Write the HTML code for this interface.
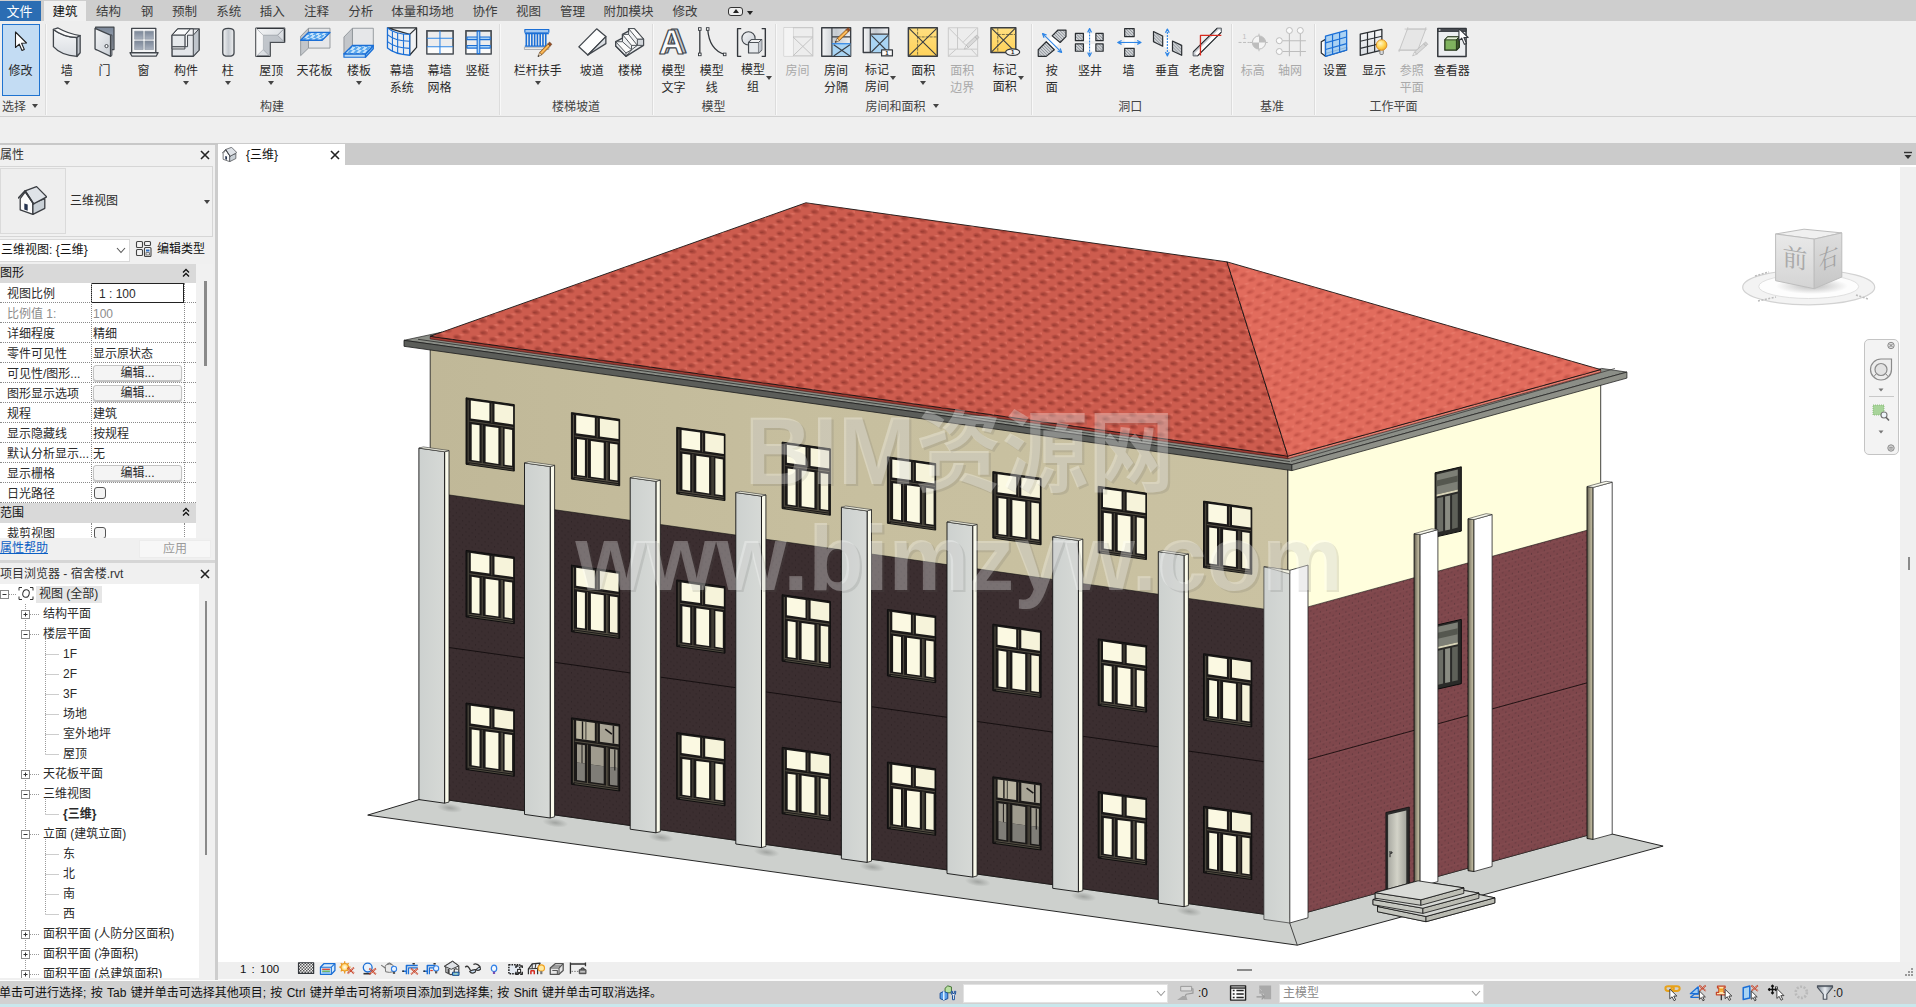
<!DOCTYPE html>
<html lang="zh-CN"><head><meta charset="utf-8"><title>Revit</title>
<style>
*{box-sizing:border-box}
html,body{margin:0;padding:0}
body{width:1916px;height:1007px;position:relative;overflow:hidden;background:#fff;font:12px/14px "Liberation Sans","Noto Sans CJK SC",sans-serif;color:#2a2a2a}
.a{position:absolute}
.t{position:absolute;white-space:nowrap}
.c{position:absolute;white-space:nowrap;transform:translateX(-50%);text-align:center}
.dis{color:#a9a9a9}
.arr{position:absolute;width:0;height:0;border-left:3px solid transparent;border-right:3px solid transparent;border-top:4px solid #444}
.sep{position:absolute;top:24px;height:91px;width:1px;background:#dcdcdc;border-right:1px solid #f8f8f8;box-sizing:content-box}
.row{position:absolute;left:0;width:196px;height:20px;border-bottom:1px dotted #8a8a8a}
.row .l{position:absolute;left:7px;top:3.5px;white-space:nowrap}
.row .v{position:absolute;left:93px;top:3.5px;white-space:nowrap}
.btn{position:absolute;left:93px;top:2px;width:89px;height:16px;border:1px solid #c4c4c4;border-radius:3px;background:#f4f4f4;text-align:center;line-height:14px;box-shadow:0 1px 1px #bbb}
.tree{position:absolute;white-space:nowrap}
</style></head><body>

<div class="a" style="left:0;top:0;width:1916px;height:21px;background:#cecece"></div>
<div class="a" style="left:0;top:1px;width:41px;height:20px;background:#2b6db3"></div>
<div class="c" style="left:19.5px;top:5px;color:#fff;font-size:13px">文件</div>
<div class="a" style="left:44px;top:1px;width:42px;height:20px;background:#f0f0f0"></div>
<div class="c" style="left:65px;top:5px;color:#111;font-size:12.5px">建筑</div>
<div class="c" style="left:108.5px;top:5px;color:#3c3c3c;font-size:12.5px">结构</div>
<div class="c" style="left:147px;top:5px;color:#3c3c3c;font-size:12.5px">钢</div>
<div class="c" style="left:184.4px;top:5px;color:#3c3c3c;font-size:12.5px">预制</div>
<div class="c" style="left:228.8px;top:5px;color:#3c3c3c;font-size:12.5px">系统</div>
<div class="c" style="left:272.2px;top:5px;color:#3c3c3c;font-size:12.5px">插入</div>
<div class="c" style="left:316.6px;top:5px;color:#3c3c3c;font-size:12.5px">注释</div>
<div class="c" style="left:360.7px;top:5px;color:#3c3c3c;font-size:12.5px">分析</div>
<div class="c" style="left:422.5px;top:5px;color:#3c3c3c;font-size:12.5px">体量和场地</div>
<div class="c" style="left:485px;top:5px;color:#3c3c3c;font-size:12.5px">协作</div>
<div class="c" style="left:528.4px;top:5px;color:#3c3c3c;font-size:12.5px">视图</div>
<div class="c" style="left:572.5px;top:5px;color:#3c3c3c;font-size:12.5px">管理</div>
<div class="c" style="left:628.6px;top:5px;color:#3c3c3c;font-size:12.5px">附加模块</div>
<div class="c" style="left:685px;top:5px;color:#3c3c3c;font-size:12.5px">修改</div>
<div class="a" style="left:728px;top:7px;width:15px;height:9px;border:1px solid #333;border-radius:3px;background:#eee"></div>
<div class="a" style="left:733px;top:9px;width:0;height:0;border-left:3px solid transparent;border-right:3px solid transparent;border-bottom:4px solid #222"></div>
<div class="arr" style="left:747px;top:11px;border-top-color:#222"></div>
<div class="a" style="left:0;top:20.5px;width:1916px;height:96.5px;background:#eeeeee;border-bottom:1px solid #d0d0d0"></div>
<div class="a" style="left:0;top:117px;width:1916px;height:26px;background:#efefef"></div>
<div class="a" style="left:2px;top:24px;width:38px;height:72px;background:#c3dcf3;border:1px solid #1f73d0"></div>
<div class="c" style="left:20.5px;top:64.3px">修改</div>
<div class="c" style="left:66.8px;top:64.3px">墙</div>
<div class="arr" style="left:63.8px;top:81px"></div>
<div class="c" style="left:104.5px;top:64.3px">门</div>
<div class="c" style="left:143.6px;top:64.3px">窗</div>
<div class="c" style="left:186px;top:64.3px">构件</div>
<div class="arr" style="left:183px;top:81px"></div>
<div class="c" style="left:227.8px;top:64.3px">柱</div>
<div class="arr" style="left:224.8px;top:81px"></div>
<div class="c" style="left:271.2px;top:64.3px">屋顶</div>
<div class="arr" style="left:268.2px;top:81px"></div>
<div class="c" style="left:314.6px;top:64.3px">天花板</div>
<div class="c" style="left:359px;top:64.3px">楼板</div>
<div class="arr" style="left:356px;top:81px"></div>
<div class="c" style="left:401.8px;top:64.3px">幕墙</div>
<div class="c" style="left:401.8px;top:81.3px">系统</div>
<div class="c" style="left:439.5px;top:64.3px">幕墙</div>
<div class="c" style="left:439.5px;top:81.3px">网格</div>
<div class="c" style="left:477.6px;top:64.3px">竖梃</div>
<div class="c" style="left:537.7px;top:64.3px">栏杆扶手</div>
<div class="arr" style="left:534.7px;top:81px"></div>
<div class="c" style="left:591.8px;top:64.3px">坡道</div>
<div class="c" style="left:630px;top:64.3px">楼梯</div>
<div class="c" style="left:673.4px;top:64.3px">模型</div>
<div class="c" style="left:673.4px;top:81.3px">文字</div>
<div class="c" style="left:711.8px;top:64.3px">模型</div>
<div class="c" style="left:711.8px;top:81.3px">线</div>
<div class="c" style="left:752.9px;top:63px">模型</div>
<div class="c" style="left:752.9px;top:80px">组</div>
<div class="arr" style="left:765.9px;top:76px"></div>
<div class="c dis" style="left:797.6px;top:64.3px">房间</div>
<div class="c" style="left:836px;top:64.3px">房间</div>
<div class="c" style="left:836px;top:81.3px">分隔</div>
<div class="c" style="left:877px;top:63px">标记</div>
<div class="c" style="left:877px;top:80px">房间</div>
<div class="arr" style="left:890.0px;top:76px"></div>
<div class="c" style="left:923.2px;top:64.3px">面积</div>
<div class="arr" style="left:920.2px;top:81px"></div>
<div class="c dis" style="left:962.3px;top:64.3px">面积</div>
<div class="c dis" style="left:962.3px;top:81.3px">边界</div>
<div class="c" style="left:1004.7px;top:63px">标记</div>
<div class="c" style="left:1004.7px;top:80px">面积</div>
<div class="arr" style="left:1017.7px;top:76px"></div>
<div class="c" style="left:1051.8px;top:64.3px">按</div>
<div class="c" style="left:1051.8px;top:81.3px">面</div>
<div class="c" style="left:1089.9px;top:64.3px">竖井</div>
<div class="c" style="left:1128.6px;top:64.3px">墙</div>
<div class="c" style="left:1167px;top:64.3px">垂直</div>
<div class="c" style="left:1206.8px;top:64.3px">老虎窗</div>
<div class="c dis" style="left:1252.7px;top:64.3px">标高</div>
<div class="c dis" style="left:1290px;top:64.3px">轴网</div>
<div class="c" style="left:1335px;top:64.3px">设置</div>
<div class="c" style="left:1374px;top:64.3px">显示</div>
<div class="c dis" style="left:1411.8px;top:64.3px">参照</div>
<div class="c dis" style="left:1411.8px;top:81.3px">平面</div>
<div class="c" style="left:1451.7px;top:64.3px">查看器</div>
<div class="sep" style="left:45px"></div>
<div class="sep" style="left:499px"></div>
<div class="sep" style="left:652px"></div>
<div class="sep" style="left:775px"></div>
<div class="sep" style="left:1030.5px"></div>
<div class="sep" style="left:1230.5px"></div>
<div class="sep" style="left:1313.5px"></div>
<div class="c" style="left:272px;top:100px;color:#444">构建</div>
<div class="c" style="left:576px;top:100px;color:#444">楼梯坡道</div>
<div class="c" style="left:713.5px;top:100px;color:#444">模型</div>
<div class="c" style="left:895.5px;top:100px;color:#444">房间和面积</div>
<div class="c" style="left:1130.3px;top:100px;color:#444">洞口</div>
<div class="c" style="left:1272px;top:100px;color:#444">基准</div>
<div class="c" style="left:1393.6px;top:100px;color:#444">工作平面</div>
<div class="arr" style="left:932.5px;top:104px"></div>
<div class="t" style="left:2px;top:100px;color:#444">选择</div>
<div class="arr" style="left:32px;top:104px"></div>
<div class="a" style="left:0;top:143px;width:215px;height:417px;background:#f0f0f0"></div>
<div class="a" style="left:215px;top:143px;width:2.5px;height:837px;background:#cdcdcd"></div>
<div class="a" style="left:0;top:143px;width:217.5px;height:1.5px;background:#c8c8c8"></div>
<div class="t" style="left:0;top:148px;color:#333">属性</div>
<svg class="a" style="left:200px;top:150px" width="10" height="10" viewBox="0 0 10 10"><path d="M1 1L9 9M9 1L1 9" stroke="#222" stroke-width="1.6" fill="none"/></svg>
<div class="a" style="left:0;top:165.5px;width:213px;height:71px;border:1px solid #d6d6d6;border-left:none;background:#f1f1f1"></div>
<div class="a" style="left:0;top:168px;width:66px;height:66px;border:1px solid #dadada;background:#eeeeee"></div>
<svg class="a" style="left:18px;top:186px" width="29" height="29" viewBox="0 0 29 29"><path d="M2.2 12.7L7.1 6L14.9 17.1L14.9 28.3L2.2 23.8Z" fill="#fbfbfb" stroke="#3a3d42" stroke-width="1.3" stroke-linejoin="round"/><path d="M14.9 17.1L26.8 12.7L26.8 22.3L14.9 28.3Z" fill="#c9d0d6" stroke="#3a3d42" stroke-width="1.3" stroke-linejoin="round"/><path d="M6.3 17.5L9.7 18.6L9.7 24.8L6.3 23.6Z" fill="#26344f"/><path d="M7.1 4.8L18.6 .6L28.7 10.8L15.6 17.9Z" fill="#dfe3e8" stroke="#3a3d42" stroke-width="1.3" stroke-linejoin="round"/><path d="M.4 11.9L7.1 4.8L15.6 17.9" fill="none" stroke="#3a3d42" stroke-width="1.6" stroke-linejoin="round" stroke-linecap="round"/></svg>
<div class="t" style="left:70px;top:194px">三维视图</div>
<div class="arr" style="left:203.5px;top:200px"></div>
<div class="a" style="left:0;top:238.5px;width:129.5px;height:23.5px;background:#fff;border:1px solid #d9d9d9;border-left:none"></div>
<div class="t" style="left:1px;top:243px;color:#111">三维视图: {三维}</div>
<svg class="a" style="left:116px;top:247px" width="10" height="7" viewBox="0 0 10 7"><path d="M1 1L5 5.5L9 1" stroke="#555" stroke-width="1.1" fill="none"/></svg>
<svg class="a" style="left:135px;top:240px" width="18" height="18" viewBox="0 0 18 18"><g fill="#f4f4f4" stroke="#444" stroke-width="1.1"><rect x="1.5" y="1.5" width="6" height="6" rx="1"/><rect x="1.5" y="9.5" width="6" height="6" rx="1"/><rect x="9.5" y="1.5" width="6" height="4" rx="1"/><rect x="9.5" y="7.5" width="6.5" height="9" rx="1"/></g><rect x="11" y="9.5" width="3.5" height="2" fill="#2f6fc0"/><rect x="11" y="12.7" width="3.5" height="2.3" fill="none" stroke="#444" stroke-width=".7"/></svg>
<div class="t" style="left:157px;top:242px;color:#111">编辑类型</div>
<div class="a" style="left:0;top:264px;width:196px;height:274px;background:#fff;overflow:hidden" id="grid">
<div class="a" style="left:0;top:0;width:196px;height:19px;background:#d9d9d9"></div><div class="t" style="left:0;top:2px;color:#111">图形</div>
<svg class="a" style="left:182px;top:4px" width="8" height="10" viewBox="0 0 8 10"><path d="M1 4.5L4 1.5L7 4.5M1 8.5L4 5.5L7 8.5" stroke="#111" stroke-width="1.3" fill="none"/></svg>
<div class="row" style="top:19px"><span class="l">视图比例</span><div class="a" style="left:91px;top:0;width:93px;height:20px;border:1.5px solid #222;background:#fff"></div><span class="v" style="left:99px">1 : 100</span></div>
<div class="row" style="top:39px"><span class="l" style="color:#8c8c8c">比例值 1:</span><span class="v" style="color:#8c8c8c">100</span></div>
<div class="row" style="top:59px"><span class="l">详细程度</span><span class="v">精细</span></div>
<div class="row" style="top:79px"><span class="l">零件可见性</span><span class="v">显示原状态</span></div>
<div class="row" style="top:99px"><span class="l">可见性/图形...</span><div class="btn">编辑...</div></div>
<div class="row" style="top:119px"><span class="l">图形显示选项</span><div class="btn">编辑...</div></div>
<div class="row" style="top:139px"><span class="l">规程</span><span class="v">建筑</span></div>
<div class="row" style="top:159px"><span class="l">显示隐藏线</span><span class="v">按规程</span></div>
<div class="row" style="top:179px"><span class="l">默认分析显示...</span><span class="v">无</span></div>
<div class="row" style="top:199px"><span class="l">显示栅格</span><div class="btn">编辑...</div></div>
<div class="row" style="top:219px"><span class="l">日光路径</span><div class="a" style="left:94px;top:4px;width:12px;height:12px;border:1px solid #555;border-radius:3px;background:#f3f3f3"></div></div>
<div class="a" style="left:0;top:239px;width:196px;height:20px;background:#d9d9d9"></div><div class="t" style="left:0;top:242px;color:#111">范围</div>
<svg class="a" style="left:182px;top:243px" width="8" height="10" viewBox="0 0 8 10"><path d="M1 4.5L4 1.5L7 4.5M1 8.5L4 5.5L7 8.5" stroke="#111" stroke-width="1.3" fill="none"/></svg>
<div class="row" style="top:259px"><span class="l">裁剪视图</span><div class="a" style="left:94px;top:4px;width:12px;height:12px;border:1px solid #555;border-radius:3px;background:#f3f3f3"></div></div>
<div class="a" style="left:90.5px;top:19px;width:0;height:220px;border-left:1px dotted #8a8a8a"></div>
<div class="a" style="left:183.5px;top:19px;width:0;height:220px;border-left:1px dotted #8a8a8a"></div>
<div class="a" style="left:90.5px;top:259px;width:0;height:20px;border-left:1px dotted #8a8a8a"></div>
<div class="a" style="left:183.5px;top:259px;width:0;height:20px;border-left:1px dotted #8a8a8a"></div>
</div>
<div class="a" style="left:196px;top:264px;width:17px;height:274px;background:#f1f1f1"></div>
<div class="a" style="left:204px;top:281px;width:2.5px;height:85px;background:#8a8a8a"></div>
<div class="t" style="left:0;top:541px;color:#0b5fc4;text-decoration:underline">属性帮助</div>
<div class="a" style="left:139px;top:539.5px;width:72px;height:18px;background:#f7f7f7;border:1px solid #ececec;color:#9a9a9a;text-align:center;line-height:16px">应用</div>
<div class="a" style="left:0;top:560px;width:215px;height:3px;background:#d6d6d6"></div>
<div class="a" style="left:0;top:563px;width:215px;height:417px;background:#f0f0f0"></div>
<div class="t" style="left:0;top:567px;color:#333">项目浏览器 - 宿舍楼.rvt</div>
<svg class="a" style="left:200px;top:569px" width="10" height="10" viewBox="0 0 10 10"><path d="M1 1L9 9M9 1L1 9" stroke="#222" stroke-width="1.6" fill="none"/></svg>
<div class="a" style="left:0;top:584px;width:199px;height:394px;background:#fff;overflow:hidden">
<svg class="a" style="left:0;top:0" width="199" height="394" viewBox="0 0 199 394"><g stroke="#9a9a9a" stroke-width="1" stroke-dasharray="1 1" fill="none">
<path d="M9 10.5 H17"/>
<path d="M30 30.5 H39"/>
<path d="M30 50.5 H39"/>
<path d="M45.5 70.5 H59"/>
<path d="M45.5 90.5 H59"/>
<path d="M45.5 110.5 H59"/>
<path d="M45.5 130.5 H59"/>
<path d="M45.5 150.5 H59"/>
<path d="M45.5 170.5 H59"/>
<path d="M30 190.5 H39"/>
<path d="M30 210.5 H39"/>
<path d="M45.5 230.5 H59"/>
<path d="M30 250.5 H39"/>
<path d="M45.5 270.5 H59"/>
<path d="M45.5 290.5 H59"/>
<path d="M45.5 310.5 H59"/>
<path d="M45.5 330.5 H59"/>
<path d="M30 350.5 H39"/>
<path d="M30 370.5 H39"/>
<path d="M30 390.5 H39"/>
<path d="M25.5 20 V394"/>
<path d="M45.5 55 V169.5"/><path d="M45.5 215 V229.5"/><path d="M45.5 255 V329.5"/>
</g>
<rect x="0.5" y="6.5" width="8" height="8" fill="#fff" stroke="#8a8a8a" stroke-width="1"/>
<path d="M2.5 10.5 h4" stroke="#333" stroke-width="1"/>
<rect x="21.5" y="26.5" width="8" height="8" fill="#fff" stroke="#8a8a8a" stroke-width="1"/>
<path d="M23.5 30.5 h4" stroke="#333" stroke-width="1"/>
<path d="M25.5 28.5 v4" stroke="#333" stroke-width="1"/>
<rect x="21.5" y="46.5" width="8" height="8" fill="#fff" stroke="#8a8a8a" stroke-width="1"/>
<path d="M23.5 50.5 h4" stroke="#333" stroke-width="1"/>
<rect x="21.5" y="186.5" width="8" height="8" fill="#fff" stroke="#8a8a8a" stroke-width="1"/>
<path d="M23.5 190.5 h4" stroke="#333" stroke-width="1"/>
<path d="M25.5 188.5 v4" stroke="#333" stroke-width="1"/>
<rect x="21.5" y="206.5" width="8" height="8" fill="#fff" stroke="#8a8a8a" stroke-width="1"/>
<path d="M23.5 210.5 h4" stroke="#333" stroke-width="1"/>
<rect x="21.5" y="246.5" width="8" height="8" fill="#fff" stroke="#8a8a8a" stroke-width="1"/>
<path d="M23.5 250.5 h4" stroke="#333" stroke-width="1"/>
<rect x="21.5" y="346.5" width="8" height="8" fill="#fff" stroke="#8a8a8a" stroke-width="1"/>
<path d="M23.5 350.5 h4" stroke="#333" stroke-width="1"/>
<path d="M25.5 348.5 v4" stroke="#333" stroke-width="1"/>
<rect x="21.5" y="366.5" width="8" height="8" fill="#fff" stroke="#8a8a8a" stroke-width="1"/>
<path d="M23.5 370.5 h4" stroke="#333" stroke-width="1"/>
<path d="M25.5 368.5 v4" stroke="#333" stroke-width="1"/>
<rect x="21.5" y="386.5" width="8" height="8" fill="#fff" stroke="#8a8a8a" stroke-width="1"/>
<path d="M23.5 390.5 h4" stroke="#333" stroke-width="1"/>
<path d="M25.5 388.5 v4" stroke="#333" stroke-width="1"/>
<g stroke="#333" stroke-width="1" fill="none"><path d="M22 3.5h-3v3M30 3.5h3v3M22 15.5h-3v-3M30 15.5h3v-3"/><ellipse cx="26" cy="9.5" rx="3.2" ry="3.8" transform="rotate(15 26 9.5)"/></g>
</svg>
<div class="a" style="left:36px;top:2.0px;width:66px;height:17px;background:#e6e6e6"></div>
<div class="tree" style="left:39px;top:3.0px;">视图 (全部)</div>
<div class="tree" style="left:43px;top:23.0px;">结构平面</div>
<div class="tree" style="left:43px;top:43.0px;">楼层平面</div>
<div class="tree" style="left:63px;top:63.0px;">1F</div>
<div class="tree" style="left:63px;top:83.0px;">2F</div>
<div class="tree" style="left:63px;top:103.0px;">3F</div>
<div class="tree" style="left:63px;top:123.0px;">场地</div>
<div class="tree" style="left:63px;top:143.0px;">室外地坪</div>
<div class="tree" style="left:63px;top:163.0px;">屋顶</div>
<div class="tree" style="left:43px;top:183.0px;">天花板平面</div>
<div class="tree" style="left:43px;top:203.0px;">三维视图</div>
<div class="tree" style="left:63px;top:223.0px;font-weight:bold;">{三维}</div>
<div class="tree" style="left:43px;top:243.0px;">立面 (建筑立面)</div>
<div class="tree" style="left:63px;top:263.0px;">东</div>
<div class="tree" style="left:63px;top:283.0px;">北</div>
<div class="tree" style="left:63px;top:303.0px;">南</div>
<div class="tree" style="left:63px;top:323.0px;">西</div>
<div class="tree" style="left:43px;top:343.0px;">面积平面 (人防分区面积)</div>
<div class="tree" style="left:43px;top:363.0px;">面积平面 (净面积)</div>
<div class="tree" style="left:43px;top:383.0px;">面积平面 (总建筑面积)</div>
</div>
<div class="a" style="left:204.5px;top:601px;width:2.5px;height:254px;background:#8a8a8a"></div>
<div class="a" style="left:217.5px;top:143px;width:1698.5px;height:21.5px;background:#cbcbcb"></div>
<div class="a" style="left:217.5px;top:144px;width:127.5px;height:21px;background:#fff"></div>
<svg class="a" style="left:222px;top:147px" width="15" height="15" viewBox="0 0 29 29"><path d="M2.2 12.7L7.1 6L14.9 17.1L14.9 28.3L2.2 23.8Z" fill="#fbfbfb" stroke="#3a3d42" stroke-width="1.3" stroke-linejoin="round"/><path d="M14.9 17.1L26.8 12.7L26.8 22.3L14.9 28.3Z" fill="#c9d0d6" stroke="#3a3d42" stroke-width="1.3" stroke-linejoin="round"/><path d="M6.3 17.5L9.7 18.6L9.7 24.8L6.3 23.6Z" fill="#26344f"/><path d="M7.1 4.8L18.6 .6L28.7 10.8L15.6 17.9Z" fill="#dfe3e8" stroke="#3a3d42" stroke-width="1.3" stroke-linejoin="round"/><path d="M.4 11.9L7.1 4.8L15.6 17.9" fill="none" stroke="#3a3d42" stroke-width="1.6" stroke-linejoin="round" stroke-linecap="round"/></svg>
<div class="t" style="left:246px;top:148px;color:#111">{三维}</div>
<svg class="a" style="left:330px;top:150px" width="10" height="10" viewBox="0 0 10 10"><path d="M1 1L9 9M9 1L1 9" stroke="#222" stroke-width="1.6" fill="none"/></svg>
<svg class="a" style="left:1903px;top:151px" width="10" height="9" viewBox="0 0 10 9"><path d="M1 1.5h8" stroke="#333" stroke-width="1.4"/><path d="M1.5 4h7L5 8Z" fill="#333"/></svg>
<div class="a" style="left:217.5px;top:164.5px;width:1682.5px;height:797px;background:#fff"></div>
<div class="a" style="left:1900px;top:167px;width:16px;height:813px;background:#f0f0f0"></div>
<div class="a" style="left:1908px;top:557px;width:1.5px;height:13px;background:#8a8a8a"></div>
<div class="a" style="left:217.5px;top:961.5px;width:1698.5px;height:17.5px;background:#efefef"></div>
<div class="a" style="left:217.5px;top:979px;width:1698.5px;height:1.5px;background:#fafafa"></div>
<div class="t" style="left:240px;top:962px;font-size:11.5px;color:#111;word-spacing:2px">1 : 100</div>
<div class="a" style="left:1237px;top:968.5px;width:15px;height:2px;background:#8a8a8a"></div>
<svg class="a" style="left:1904px;top:967px" width="10" height="10" viewBox="0 0 10 10"><g fill="#9a9a9a"><rect x="7" y="1" width="2" height="2"/><rect x="4" y="4" width="2" height="2"/><rect x="7" y="4" width="2" height="2"/><rect x="1" y="7" width="2" height="2"/><rect x="4" y="7" width="2" height="2"/><rect x="7" y="7" width="2" height="2"/></g></svg>
<div class="a" style="left:0;top:980.5px;width:1916px;height:23.5px;background:#d1d1d1"></div>
<div class="a" style="left:0;top:1004px;width:1916px;height:3px;background:#c9e7ec"></div>
<div class="t" style="left:-1px;top:986px;color:#111;font-size:12px;word-spacing:1px">单击可进行选择; 按 Tab 键并单击可选择其他项目; 按 Ctrl 键并单击可将新项目添加到选择集; 按 Shift 键并单击可取消选择。</div>
<div class="a" style="left:963px;top:984px;width:205px;height:18.5px;background:#fff;border:1px solid #e2e2e2"></div>
<svg class="a" style="left:1156px;top:990px" width="10" height="7" viewBox="0 0 10 7"><path d="M1 1L5 5.5L9 1" stroke="#999" stroke-width="1.1" fill="none"/></svg>
<div class="t" style="left:1198px;top:986px;color:#111">:0</div>
<div class="a" style="left:1279px;top:984px;width:205px;height:18.5px;background:#fff;border:1px solid #e2e2e2"></div>
<div class="t" style="left:1283px;top:986px;color:#8a8a8a">主模型</div>
<svg class="a" style="left:1471px;top:990px" width="10" height="7" viewBox="0 0 10 7"><path d="M1 1L5 5.5L9 1" stroke="#999" stroke-width="1.1" fill="none"/></svg>
<div class="t" style="left:1833px;top:986px;color:#222">:0</div>
<div class="a" style="left:1864px;top:339px;width:34.5px;height:116px;background:#f3f3f3;border:1.5px solid #c4c4c4;border-radius:5px"></div>
<svg class="a" style="left:1864px;top:339px" width="35" height="116" viewBox="0 0 35 116"><circle cx="27" cy="6.5" r="3.2" fill="#ddd" stroke="#8a8a8a" stroke-width="1"/><path d="M25.3 4.8l3.4 3.4M28.7 4.8l-3.4 3.4" stroke="#777" stroke-width=".9"/><path d="M17 20a10.5 10.5 0 1 0 10.5 10.5V20Z" fill="#ededed" stroke="#8a8a8a" stroke-width="1.2"/><circle cx="17" cy="30.5" r="6" fill="#e2e2e2" stroke="#8a8a8a" stroke-width="1.2"/><path d="M12 35l-2.5 3M22 35l2.5 3" stroke="#8a8a8a" stroke-width="1"/><path d="M14.5 49.5h5L17 52.5Z" fill="#777"/><path d="M5 57.5h25" stroke="#c8c8c8" stroke-width="1"/><rect x="9" y="66" width="11" height="10" fill="#a8d49a" stroke="#7fb46f" stroke-width=".8" stroke-dasharray="1 1"/><circle cx="20" cy="76" r="3" fill="#eef4fa" stroke="#777" stroke-width="1.1"/><path d="M22 78.3l3 3.2" stroke="#666" stroke-width="1.6"/><path d="M14.5 91.5h5L17 94.5Z" fill="#777"/><circle cx="27" cy="109" r="3.2" fill="#ddd" stroke="#8a8a8a" stroke-width="1"/><path d="M25.2 108.3h3.6M25.2 110h3.6" stroke="#777" stroke-width=".8"/></svg>
<svg class="a" style="left:1730px;top:215px" width="160" height="100" viewBox="1730 215 160 100"><defs><radialGradient id="vcs" cx=".5" cy=".5" r=".5"><stop offset="0" stop-color="#888" stop-opacity=".55"/><stop offset="1" stop-color="#888" stop-opacity="0"/></radialGradient><linearGradient id="vcf" x1="0" y1="0" x2="0" y2="1"><stop offset="0" stop-color="#e9e9e9"/><stop offset="1" stop-color="#d4d4d4"/></linearGradient><linearGradient id="vcr" x1="0" y1="0" x2="0" y2="1"><stop offset="0" stop-color="#dedede"/><stop offset="1" stop-color="#c6c6c6"/></linearGradient></defs><ellipse cx="1808.7" cy="287.3" rx="66" ry="17.5" fill="#f3f3f3" stroke="#d2d2d2" stroke-width="1.2"/><ellipse cx="1808.7" cy="286.5" rx="50" ry="12" fill="#fdfdfd" stroke="#e0e0e0" stroke-width="1"/><ellipse cx="1812" cy="286" rx="36" ry="8" fill="url(#vcs)"/><g stroke="#bdbdbd" stroke-width="1.6" stroke-dasharray="2 1.5" fill="none"><path d="M1755 276l14-4M1758 301l18-4M1856 295l12 4"/></g><path d="M1775.6 234L1804 229.2L1841.8 232.9L1814.2 239.1Z" fill="#f0f0f0" stroke="#bdbdbd" stroke-width="1"/><path d="M1775.6 234L1814.2 239.1L1814.2 288.7L1775.6 280.7Z" fill="url(#vcf)" stroke="#bdbdbd" stroke-width="1"/><path d="M1814.2 239.1L1841.8 232.9L1841.8 277L1814.2 288.7Z" fill="url(#vcr)" stroke="#bdbdbd" stroke-width="1"/><text transform="matrix(1 .17 0 1 1795 267)" text-anchor="middle" font-family="'Liberation Serif','Noto Serif CJK SC',serif" font-size="25" fill="#a9a9a9">前</text><text transform="matrix(.78 -.3 0 1 1828.5 267)" text-anchor="middle" font-family="'Liberation Serif','Noto Serif CJK SC',serif" font-size="25" fill="#a3a3a3">右</text></svg>
<svg class="a" style="left:217.5px;top:164.5px" width="1682.5" height="797" viewBox="217.5 164.5 1682.5 797">
<defs>
<radialGradient id="bl1" cx=".5" cy=".5" r=".5"><stop offset="0" stop-color="#8f342c" stop-opacity=".75"/><stop offset=".6" stop-color="#9a3a31" stop-opacity=".45"/><stop offset="1" stop-color="#9a3a31" stop-opacity="0"/></radialGradient>
<radialGradient id="bl2" cx=".5" cy=".5" r=".5"><stop offset="0" stop-color="#f08a7a" stop-opacity=".5"/><stop offset="1" stop-color="#f08a7a" stop-opacity="0"/></radialGradient>
<radialGradient id="bl3" cx=".5" cy=".5" r=".5"><stop offset="0" stop-color="#b8493e" stop-opacity=".7"/><stop offset=".6" stop-color="#c05045" stop-opacity=".4"/><stop offset="1" stop-color="#c05045" stop-opacity="0"/></radialGradient>
<pattern id="rt" width="18" height="12" patternUnits="userSpaceOnUse" patternTransform="skewY(8) rotate(-4)"><ellipse cx="4.5" cy="3.5" rx="5" ry="3" fill="url(#bl1)"/><ellipse cx="9.0" cy="0.7000000000000002" rx="3.5" ry="1.8" fill="url(#bl2)"/><ellipse cx="3.0" cy="3.8" rx="2.2" ry="1.2" fill="url(#bl1)"/><ellipse cx="13.5" cy="9.5" rx="5" ry="3" fill="url(#bl1)"/><ellipse cx="18.0" cy="6.7" rx="3.5" ry="1.8" fill="url(#bl2)"/><ellipse cx="12.0" cy="9.8" rx="2.2" ry="1.2" fill="url(#bl1)"/><ellipse cx="22.5" cy="3.5" rx="5" ry="3" fill="url(#bl1)"/><ellipse cx="-4.5" cy="9.5" rx="5" ry="3" fill="url(#bl1)"/><ellipse cx="4.5" cy="15.5" rx="5" ry="3" fill="url(#bl1)"/><ellipse cx="13.5" cy="-2.5" rx="5" ry="3" fill="url(#bl1)"/></pattern>
<pattern id="rt2" width="18" height="12" patternUnits="userSpaceOnUse" patternTransform="skewY(-15.4) rotate(6)"><ellipse cx="4.5" cy="3.5" rx="5" ry="3" fill="url(#bl3)"/><ellipse cx="9.0" cy="0.7000000000000002" rx="3.5" ry="1.8" fill="url(#bl2)"/><ellipse cx="3.0" cy="3.8" rx="2.2" ry="1.2" fill="url(#bl3)"/><ellipse cx="13.5" cy="9.5" rx="5" ry="3" fill="url(#bl3)"/><ellipse cx="18.0" cy="6.7" rx="3.5" ry="1.8" fill="url(#bl2)"/><ellipse cx="12.0" cy="9.8" rx="2.2" ry="1.2" fill="url(#bl3)"/><ellipse cx="22.5" cy="3.5" rx="5" ry="3" fill="url(#bl3)"/><ellipse cx="-4.5" cy="9.5" rx="5" ry="3" fill="url(#bl3)"/><ellipse cx="4.5" cy="15.5" rx="5" ry="3" fill="url(#bl3)"/><ellipse cx="13.5" cy="-2.5" rx="5" ry="3" fill="url(#bl3)"/></pattern>
<pattern id="bk1" width="6.4" height="7.2" patternUnits="userSpaceOnUse" patternTransform="skewY(8)"><rect x="1" y=".8" width=".8" height="1.6" fill="#1f1517" opacity=".5"/><rect x="4.2" y="4.4" width=".8" height="1.6" fill="#1f1517" opacity=".5"/></pattern>
<pattern id="bk2" width="6.4" height="7.2" patternUnits="userSpaceOnUse" patternTransform="skewY(-15.35)"><rect x="1" y=".8" width=".8" height="1.7" fill="#452a2e" opacity=".6"/><rect x="4.2" y="4.4" width=".8" height="1.7" fill="#452a2e" opacity=".6"/><path d="M0 3.4H6.4" stroke="#93595e" stroke-width=".6" opacity=".35"/></pattern>
<linearGradient id="pf" x1="0" y1="0" x2="1" y2="0"><stop offset="0" stop-color="#cdd1cf"/><stop offset="1" stop-color="#d6d9d6"/></linearGradient>
<linearGradient id="pb" x1="0" y1="0" x2="1" y2="0"><stop offset="0" stop-color="#5d594b"/><stop offset=".5" stop-color="#a39d86"/><stop offset="1" stop-color="#cfc9ad"/></linearGradient>
<linearGradient id="gw" x1="0" y1="0" x2="1" y2="0"><stop offset="0" stop-color="#c0b898"/><stop offset=".5" stop-color="#c7bf9f"/><stop offset="1" stop-color="#cac2a2"/></linearGradient>
</defs>
<polygon points="367.2,814.6 1296.8,944.7 1662.6,845.6 1600.0,830.8 1287.0,895.0 430.0,795.6" fill="#cdd0cd" stroke="#111" stroke-width="0.9" stroke-linejoin="round" />
<path d="M1289.2 922.5L1296.8 944.7" stroke="#222" stroke-width=".8"/>
<polygon points="429.7,797.0 1287.4,917.1 1287.4,466.7 429.7,346.7" fill="url(#gw)" stroke="#111" stroke-width="0.8" stroke-linejoin="round" />
<polygon points="429.7,797.0 1287.4,917.1 1287.4,611.9 429.7,491.8" fill="#3b2e30" stroke="#111" stroke-width="0.6" stroke-linejoin="round" />
<polygon points="429.7,797.0 1287.4,917.1 1287.4,611.9 429.7,491.8" fill="url(#bk1)" stroke="none" stroke-width="0" stroke-linejoin="round" />
<path d="M429.7 644.4L1287.4 764.5" stroke="#120c0d" stroke-width=".9"/>
<polygon points="1287.4,917.1 1600.2,831.2 1600.2,382.5 1287.4,468.4" fill="#fffedd" stroke="#111" stroke-width="0.8" stroke-linejoin="round" />
<polygon points="1287.4,917.1 1600.2,831.2 1600.2,526.0 1287.4,611.9" fill="#7f474c" stroke="#111" stroke-width="0.6" stroke-linejoin="round" />
<polygon points="1287.4,917.1 1600.2,831.2 1600.2,526.0 1287.4,611.9" fill="url(#bk2)" stroke="none" stroke-width="0" stroke-linejoin="round" />
<path d="M1287.4 764.5L1600.2 678.6" stroke="#1a0d0f" stroke-width=".9"/>
<polygon points="465.5,769.0 513.8,775.8 513.8,709.3 465.5,702.5" fill="#1b1918" stroke="#0c0c0c" stroke-width="0.9" stroke-linejoin="round" /><path d="M467.7 704.8L467.7 767.3" stroke="#857d69" stroke-width="0.55" fill="none"/><path d="M468.4 766.4L512.4 772.6" stroke="#857d69" stroke-width="0.55" fill="none"/><path d="M468.9 768.5L512.4 774.6" stroke="#6f6958" stroke-width="0.6" fill="none"/><path d="M468.9 725.9L512.8 732.1" stroke="#857d69" stroke-width="0.55" fill="none"/><path d="M491.3 708.1L491.3 727.4" stroke="#857d69" stroke-width="0.55" fill="none"/><path d="M481.7 729.4L481.7 768.0" stroke="#857d69" stroke-width="0.55" fill="none"/><path d="M500.8 732.1L500.8 770.6" stroke="#857d69" stroke-width="0.55" fill="none"/><path d="M502.0 732.2L502.0 770.8" stroke="#6f6958" stroke-width="0.6" fill="none"/><polygon points="470.3,723.1 488.9,725.7 488.9,707.8 470.3,705.2" fill="#fbf9e2" stroke="none" stroke-width="0" stroke-linejoin="round" /><polygon points="494.0,726.5 512.6,729.1 512.6,711.1 494.0,708.5" fill="#f6f3da" stroke="none" stroke-width="0" stroke-linejoin="round" /><polygon points="471.2,764.8 479.0,765.9 479.0,730.0 471.2,728.9" fill="#fbf9e2" stroke="none" stroke-width="0" stroke-linejoin="round" /><polygon points="485.1,766.8 497.9,768.6 497.9,732.6 485.1,730.9" fill="#fbf9e2" stroke="none" stroke-width="0" stroke-linejoin="round" /><polygon points="504.1,769.4 511.6,770.5 511.6,734.6 504.1,733.5" fill="#f6f3da" stroke="none" stroke-width="0" stroke-linejoin="round" />
<polygon points="570.9,783.8 619.2,790.5 619.2,724.0 570.9,717.3" fill="#1b1918" stroke="#0c0c0c" stroke-width="0.9" stroke-linejoin="round" /><path d="M573.0 719.6L573.0 782.1" stroke="#857d69" stroke-width="0.55" fill="none"/><path d="M573.8 781.2L617.7 787.3" stroke="#857d69" stroke-width="0.55" fill="none"/><path d="M574.2 783.2L617.7 789.3" stroke="#6f6958" stroke-width="0.6" fill="none"/><path d="M574.2 740.7L618.2 746.8" stroke="#857d69" stroke-width="0.55" fill="none"/><path d="M596.7 722.9L596.7 742.2" stroke="#857d69" stroke-width="0.55" fill="none"/><path d="M587.0 744.1L587.0 782.7" stroke="#857d69" stroke-width="0.55" fill="none"/><path d="M606.1 746.8L606.1 785.4" stroke="#857d69" stroke-width="0.55" fill="none"/><path d="M607.3 747.0L607.3 785.5" stroke="#6f6958" stroke-width="0.6" fill="none"/><polygon points="575.7,737.9 594.3,740.5 594.3,722.5 575.7,719.9" fill="#b9b4a0" stroke="none" stroke-width="0" stroke-linejoin="round" /><polygon points="599.4,741.2 618.0,743.8 618.0,725.9 599.4,723.2" fill="#a9a596" stroke="none" stroke-width="0" stroke-linejoin="round" /><polygon points="576.5,761.9 584.4,763.0 584.4,744.8 576.5,743.7" fill="#9f9b8e" stroke="none" stroke-width="0" stroke-linejoin="round" /><polygon points="576.5,779.6 584.4,780.7 584.4,763.0 576.5,761.9" fill="#7f7d77" stroke="none" stroke-width="0" stroke-linejoin="round" /><polygon points="590.4,763.9 603.2,765.7 603.2,747.4 590.4,745.6" fill="#9f9b8e" stroke="none" stroke-width="0" stroke-linejoin="round" /><polygon points="590.4,781.5 603.2,783.3 603.2,765.7 590.4,763.9" fill="#7f7d77" stroke="none" stroke-width="0" stroke-linejoin="round" /><polygon points="609.5,766.6 617.0,767.6 617.0,749.3 609.5,748.3" fill="#9f9b8e" stroke="none" stroke-width="0" stroke-linejoin="round" /><polygon points="609.5,784.2 617.0,785.2 617.0,767.6 609.5,766.6" fill="#7f7d77" stroke="none" stroke-width="0" stroke-linejoin="round" /><path d="M582.0 720.8L582.0 738.8" stroke="#1b1918" stroke-width="1.4" fill="none"/><path d="M585.4 721.3L585.4 739.2" stroke="#1b1918" stroke-width="0.8" fill="none"/><path d="M612.9 725.1L612.9 743.1" stroke="#1b1918" stroke-width="1.6" fill="none"/><path d="M581.5 744.4L581.5 762.6" stroke="#1b1918" stroke-width="1.0" fill="none"/><path d="M614.3 749.0L614.3 769.9" stroke="#1b1918" stroke-width="1.2" fill="none"/><path d="M604.7 728.6L611.4 733.6" stroke="#1b1918" stroke-width="1.6" fill="none"/>
<polygon points="676.2,798.5 724.5,805.3 724.5,738.8 676.2,732.0" fill="#1b1918" stroke="#0c0c0c" stroke-width="0.9" stroke-linejoin="round" /><path d="M678.4 734.3L678.4 796.8" stroke="#857d69" stroke-width="0.55" fill="none"/><path d="M679.1 795.9L723.1 802.1" stroke="#857d69" stroke-width="0.55" fill="none"/><path d="M679.6 798.0L723.1 804.1" stroke="#6f6958" stroke-width="0.6" fill="none"/><path d="M679.6 755.4L723.6 761.6" stroke="#857d69" stroke-width="0.55" fill="none"/><path d="M702.1 737.6L702.1 756.9" stroke="#857d69" stroke-width="0.55" fill="none"/><path d="M692.4 758.9L692.4 797.5" stroke="#857d69" stroke-width="0.55" fill="none"/><path d="M711.5 761.6L711.5 800.1" stroke="#857d69" stroke-width="0.55" fill="none"/><path d="M712.7 761.7L712.7 800.3" stroke="#6f6958" stroke-width="0.6" fill="none"/><polygon points="681.1,752.6 699.6,755.2 699.6,737.3 681.1,734.7" fill="#fbf9e2" stroke="none" stroke-width="0" stroke-linejoin="round" /><polygon points="704.7,756.0 723.3,758.6 723.3,740.6 704.7,738.0" fill="#f6f3da" stroke="none" stroke-width="0" stroke-linejoin="round" /><polygon points="681.9,794.3 689.7,795.4 689.7,759.5 681.9,758.4" fill="#fbf9e2" stroke="none" stroke-width="0" stroke-linejoin="round" /><polygon points="695.8,796.3 708.6,798.1 708.6,762.1 695.8,760.4" fill="#fbf9e2" stroke="none" stroke-width="0" stroke-linejoin="round" /><polygon points="714.9,798.9 722.3,800.0 722.3,764.1 714.9,763.0" fill="#f6f3da" stroke="none" stroke-width="0" stroke-linejoin="round" />
<polygon points="781.6,813.3 829.9,820.0 829.9,753.5 781.6,746.8" fill="#1b1918" stroke="#0c0c0c" stroke-width="0.9" stroke-linejoin="round" /><path d="M783.8 749.1L783.8 811.6" stroke="#857d69" stroke-width="0.55" fill="none"/><path d="M784.5 810.7L828.4 816.8" stroke="#857d69" stroke-width="0.55" fill="none"/><path d="M785.0 812.7L828.4 818.8" stroke="#6f6958" stroke-width="0.6" fill="none"/><path d="M785.0 770.2L828.9 776.3" stroke="#857d69" stroke-width="0.55" fill="none"/><path d="M807.4 752.4L807.4 771.7" stroke="#857d69" stroke-width="0.55" fill="none"/><path d="M797.8 773.6L797.8 812.2" stroke="#857d69" stroke-width="0.55" fill="none"/><path d="M816.8 776.3L816.8 814.9" stroke="#857d69" stroke-width="0.55" fill="none"/><path d="M818.0 776.5L818.0 815.0" stroke="#6f6958" stroke-width="0.6" fill="none"/><polygon points="786.4,767.4 805.0,770.0 805.0,752.0 786.4,749.4" fill="#fbf9e2" stroke="none" stroke-width="0" stroke-linejoin="round" /><polygon points="810.1,770.7 828.7,773.3 828.7,755.4 810.1,752.7" fill="#f6f3da" stroke="none" stroke-width="0" stroke-linejoin="round" /><polygon points="787.2,809.1 795.1,810.2 795.1,774.3 787.2,773.2" fill="#fbf9e2" stroke="none" stroke-width="0" stroke-linejoin="round" /><polygon points="801.1,811.0 813.9,812.8 813.9,776.9 801.1,775.1" fill="#fbf9e2" stroke="none" stroke-width="0" stroke-linejoin="round" /><polygon points="820.2,813.7 827.7,814.7 827.7,778.8 820.2,777.8" fill="#f6f3da" stroke="none" stroke-width="0" stroke-linejoin="round" />
<polygon points="886.9,828.0 935.2,834.8 935.2,768.3 886.9,761.5" fill="#1b1918" stroke="#0c0c0c" stroke-width="0.9" stroke-linejoin="round" /><path d="M889.1 763.8L889.1 826.3" stroke="#857d69" stroke-width="0.55" fill="none"/><path d="M889.8 825.4L933.8 831.6" stroke="#857d69" stroke-width="0.55" fill="none"/><path d="M890.3 827.5L933.8 833.6" stroke="#6f6958" stroke-width="0.6" fill="none"/><path d="M890.3 784.9L934.3 791.1" stroke="#857d69" stroke-width="0.55" fill="none"/><path d="M912.8 767.1L912.8 786.4" stroke="#857d69" stroke-width="0.55" fill="none"/><path d="M903.1 788.4L903.1 827.0" stroke="#857d69" stroke-width="0.55" fill="none"/><path d="M922.2 791.1L922.2 829.6" stroke="#857d69" stroke-width="0.55" fill="none"/><path d="M923.4 791.2L923.4 829.8" stroke="#6f6958" stroke-width="0.6" fill="none"/><polygon points="891.8,782.1 910.4,784.7 910.4,766.8 891.8,764.2" fill="#fbf9e2" stroke="none" stroke-width="0" stroke-linejoin="round" /><polygon points="915.4,785.5 934.0,788.1 934.0,770.1 915.4,767.5" fill="#f6f3da" stroke="none" stroke-width="0" stroke-linejoin="round" /><polygon points="892.6,823.8 900.5,824.9 900.5,789.0 892.6,787.9" fill="#fbf9e2" stroke="none" stroke-width="0" stroke-linejoin="round" /><polygon points="906.5,825.8 919.3,827.6 919.3,791.6 906.5,789.9" fill="#fbf9e2" stroke="none" stroke-width="0" stroke-linejoin="round" /><polygon points="925.6,828.4 933.1,829.5 933.1,793.6 925.6,792.5" fill="#f6f3da" stroke="none" stroke-width="0" stroke-linejoin="round" />
<polygon points="992.3,842.8 1040.6,849.5 1040.6,783.0 992.3,776.3" fill="#1b1918" stroke="#0c0c0c" stroke-width="0.9" stroke-linejoin="round" /><path d="M994.5 778.6L994.5 841.1" stroke="#857d69" stroke-width="0.55" fill="none"/><path d="M995.2 840.2L1039.2 846.3" stroke="#857d69" stroke-width="0.55" fill="none"/><path d="M995.7 842.2L1039.2 848.3" stroke="#6f6958" stroke-width="0.6" fill="none"/><path d="M995.7 799.7L1039.6 805.8" stroke="#857d69" stroke-width="0.55" fill="none"/><path d="M1018.1 781.9L1018.1 801.2" stroke="#857d69" stroke-width="0.55" fill="none"/><path d="M1008.5 803.1L1008.5 841.7" stroke="#857d69" stroke-width="0.55" fill="none"/><path d="M1027.6 805.8L1027.6 844.4" stroke="#857d69" stroke-width="0.55" fill="none"/><path d="M1028.8 806.0L1028.8 844.5" stroke="#6f6958" stroke-width="0.6" fill="none"/><polygon points="997.1,796.9 1015.7,799.5 1015.7,781.5 997.1,778.9" fill="#b9b4a0" stroke="none" stroke-width="0" stroke-linejoin="round" /><polygon points="1020.8,800.2 1039.4,802.8 1039.4,784.9 1020.8,782.2" fill="#a9a596" stroke="none" stroke-width="0" stroke-linejoin="round" /><polygon points="998.0,820.9 1005.8,822.0 1005.8,803.8 998.0,802.7" fill="#9f9b8e" stroke="none" stroke-width="0" stroke-linejoin="round" /><polygon points="998.0,838.6 1005.8,839.7 1005.8,822.0 998.0,820.9" fill="#7f7d77" stroke="none" stroke-width="0" stroke-linejoin="round" /><polygon points="1011.9,822.9 1024.7,824.7 1024.7,806.4 1011.9,804.6" fill="#9f9b8e" stroke="none" stroke-width="0" stroke-linejoin="round" /><polygon points="1011.9,840.5 1024.7,842.3 1024.7,824.7 1011.9,822.9" fill="#7f7d77" stroke="none" stroke-width="0" stroke-linejoin="round" /><polygon points="1030.9,825.6 1038.4,826.6 1038.4,808.3 1030.9,807.3" fill="#9f9b8e" stroke="none" stroke-width="0" stroke-linejoin="round" /><polygon points="1030.9,843.2 1038.4,844.2 1038.4,826.6 1030.9,825.6" fill="#7f7d77" stroke="none" stroke-width="0" stroke-linejoin="round" /><path d="M1003.4 779.8L1003.4 797.8" stroke="#1b1918" stroke-width="1.4" fill="none"/><path d="M1006.8 780.3L1006.8 798.2" stroke="#1b1918" stroke-width="0.8" fill="none"/><path d="M1034.3 784.1L1034.3 802.1" stroke="#1b1918" stroke-width="1.6" fill="none"/><path d="M1002.9 803.4L1002.9 821.6" stroke="#1b1918" stroke-width="1.0" fill="none"/><path d="M1035.8 808.0L1035.8 828.9" stroke="#1b1918" stroke-width="1.2" fill="none"/><path d="M1026.1 787.6L1032.9 792.6" stroke="#1b1918" stroke-width="1.6" fill="none"/>
<polygon points="1097.7,857.5 1146.0,864.3 1146.0,797.8 1097.7,791.0" fill="#1b1918" stroke="#0c0c0c" stroke-width="0.9" stroke-linejoin="round" /><path d="M1099.8 793.3L1099.8 855.8" stroke="#857d69" stroke-width="0.55" fill="none"/><path d="M1100.6 854.9L1144.5 861.1" stroke="#857d69" stroke-width="0.55" fill="none"/><path d="M1101.0 857.0L1144.5 863.1" stroke="#6f6958" stroke-width="0.6" fill="none"/><path d="M1101.0 814.4L1145.0 820.6" stroke="#857d69" stroke-width="0.55" fill="none"/><path d="M1123.5 796.6L1123.5 815.9" stroke="#857d69" stroke-width="0.55" fill="none"/><path d="M1113.8 817.9L1113.8 856.5" stroke="#857d69" stroke-width="0.55" fill="none"/><path d="M1132.9 820.6L1132.9 859.1" stroke="#857d69" stroke-width="0.55" fill="none"/><path d="M1134.1 820.7L1134.1 859.3" stroke="#6f6958" stroke-width="0.6" fill="none"/><polygon points="1102.5,811.6 1121.1,814.2 1121.1,796.3 1102.5,793.7" fill="#fbf9e2" stroke="none" stroke-width="0" stroke-linejoin="round" /><polygon points="1126.2,815.0 1144.8,817.6 1144.8,799.6 1126.2,797.0" fill="#f6f3da" stroke="none" stroke-width="0" stroke-linejoin="round" /><polygon points="1103.3,853.3 1111.2,854.4 1111.2,818.5 1103.3,817.4" fill="#fbf9e2" stroke="none" stroke-width="0" stroke-linejoin="round" /><polygon points="1117.2,855.3 1130.0,857.1 1130.0,821.1 1117.2,819.4" fill="#fbf9e2" stroke="none" stroke-width="0" stroke-linejoin="round" /><polygon points="1136.3,857.9 1143.8,859.0 1143.8,823.1 1136.3,822.0" fill="#f6f3da" stroke="none" stroke-width="0" stroke-linejoin="round" />
<polygon points="1203.0,872.3 1251.3,879.0 1251.3,812.5 1203.0,805.8" fill="#1b1918" stroke="#0c0c0c" stroke-width="0.9" stroke-linejoin="round" /><path d="M1205.2 808.1L1205.2 870.6" stroke="#857d69" stroke-width="0.55" fill="none"/><path d="M1205.9 869.7L1249.9 875.8" stroke="#857d69" stroke-width="0.55" fill="none"/><path d="M1206.4 871.7L1249.9 877.8" stroke="#6f6958" stroke-width="0.6" fill="none"/><path d="M1206.4 829.2L1250.4 835.3" stroke="#857d69" stroke-width="0.55" fill="none"/><path d="M1228.9 811.4L1228.9 830.7" stroke="#857d69" stroke-width="0.55" fill="none"/><path d="M1219.2 832.6L1219.2 871.2" stroke="#857d69" stroke-width="0.55" fill="none"/><path d="M1238.3 835.3L1238.3 873.9" stroke="#857d69" stroke-width="0.55" fill="none"/><path d="M1239.5 835.5L1239.5 874.0" stroke="#6f6958" stroke-width="0.6" fill="none"/><polygon points="1207.8,826.4 1226.4,829.0 1226.4,811.0 1207.8,808.4" fill="#fbf9e2" stroke="none" stroke-width="0" stroke-linejoin="round" /><polygon points="1231.5,829.7 1250.1,832.3 1250.1,814.4 1231.5,811.7" fill="#f6f3da" stroke="none" stroke-width="0" stroke-linejoin="round" /><polygon points="1208.7,868.1 1216.5,869.2 1216.5,833.3 1208.7,832.2" fill="#fbf9e2" stroke="none" stroke-width="0" stroke-linejoin="round" /><polygon points="1222.6,870.0 1235.4,871.8 1235.4,835.9 1222.6,834.1" fill="#fbf9e2" stroke="none" stroke-width="0" stroke-linejoin="round" /><polygon points="1241.7,872.7 1249.1,873.7 1249.1,837.8 1241.7,836.8" fill="#f6f3da" stroke="none" stroke-width="0" stroke-linejoin="round" />
<polygon points="465.5,616.4 513.8,623.2 513.8,556.7 465.5,549.9" fill="#1b1918" stroke="#0c0c0c" stroke-width="0.9" stroke-linejoin="round" /><path d="M467.7 552.2L467.7 614.7" stroke="#857d69" stroke-width="0.55" fill="none"/><path d="M468.4 613.8L512.4 620.0" stroke="#857d69" stroke-width="0.55" fill="none"/><path d="M468.9 615.9L512.4 622.0" stroke="#6f6958" stroke-width="0.6" fill="none"/><path d="M468.9 573.3L512.8 579.5" stroke="#857d69" stroke-width="0.55" fill="none"/><path d="M491.3 555.5L491.3 574.8" stroke="#857d69" stroke-width="0.55" fill="none"/><path d="M481.7 576.8L481.7 615.4" stroke="#857d69" stroke-width="0.55" fill="none"/><path d="M500.8 579.5L500.8 618.0" stroke="#857d69" stroke-width="0.55" fill="none"/><path d="M502.0 579.6L502.0 618.2" stroke="#6f6958" stroke-width="0.6" fill="none"/><polygon points="470.3,570.5 488.9,573.1 488.9,555.2 470.3,552.6" fill="#fbf9e2" stroke="none" stroke-width="0" stroke-linejoin="round" /><polygon points="494.0,573.9 512.6,576.5 512.6,558.5 494.0,555.9" fill="#f6f3da" stroke="none" stroke-width="0" stroke-linejoin="round" /><polygon points="471.2,612.2 479.0,613.3 479.0,577.4 471.2,576.3" fill="#fbf9e2" stroke="none" stroke-width="0" stroke-linejoin="round" /><polygon points="485.1,614.2 497.9,616.0 497.9,580.0 485.1,578.3" fill="#fbf9e2" stroke="none" stroke-width="0" stroke-linejoin="round" /><polygon points="504.1,616.8 511.6,617.9 511.6,582.0 504.1,580.9" fill="#f6f3da" stroke="none" stroke-width="0" stroke-linejoin="round" />
<polygon points="570.9,631.2 619.2,637.9 619.2,571.4 570.9,564.7" fill="#1b1918" stroke="#0c0c0c" stroke-width="0.9" stroke-linejoin="round" /><path d="M573.0 567.0L573.0 629.5" stroke="#857d69" stroke-width="0.55" fill="none"/><path d="M573.8 628.6L617.7 634.7" stroke="#857d69" stroke-width="0.55" fill="none"/><path d="M574.2 630.6L617.7 636.7" stroke="#6f6958" stroke-width="0.6" fill="none"/><path d="M574.2 588.1L618.2 594.2" stroke="#857d69" stroke-width="0.55" fill="none"/><path d="M596.7 570.3L596.7 589.6" stroke="#857d69" stroke-width="0.55" fill="none"/><path d="M587.0 591.5L587.0 630.1" stroke="#857d69" stroke-width="0.55" fill="none"/><path d="M606.1 594.2L606.1 632.8" stroke="#857d69" stroke-width="0.55" fill="none"/><path d="M607.3 594.4L607.3 632.9" stroke="#6f6958" stroke-width="0.6" fill="none"/><polygon points="575.7,585.3 594.3,587.9 594.3,569.9 575.7,567.3" fill="#fbf9e2" stroke="none" stroke-width="0" stroke-linejoin="round" /><polygon points="599.4,588.6 618.0,591.2 618.0,573.3 599.4,570.6" fill="#f6f3da" stroke="none" stroke-width="0" stroke-linejoin="round" /><polygon points="576.5,627.0 584.4,628.1 584.4,592.2 576.5,591.1" fill="#fbf9e2" stroke="none" stroke-width="0" stroke-linejoin="round" /><polygon points="590.4,628.9 603.2,630.7 603.2,594.8 590.4,593.0" fill="#fbf9e2" stroke="none" stroke-width="0" stroke-linejoin="round" /><polygon points="609.5,631.6 617.0,632.6 617.0,596.7 609.5,595.7" fill="#f6f3da" stroke="none" stroke-width="0" stroke-linejoin="round" />
<polygon points="676.2,645.9 724.5,652.7 724.5,586.2 676.2,579.4" fill="#1b1918" stroke="#0c0c0c" stroke-width="0.9" stroke-linejoin="round" /><path d="M678.4 581.7L678.4 644.2" stroke="#857d69" stroke-width="0.55" fill="none"/><path d="M679.1 643.3L723.1 649.5" stroke="#857d69" stroke-width="0.55" fill="none"/><path d="M679.6 645.4L723.1 651.5" stroke="#6f6958" stroke-width="0.6" fill="none"/><path d="M679.6 602.8L723.6 609.0" stroke="#857d69" stroke-width="0.55" fill="none"/><path d="M702.1 585.0L702.1 604.3" stroke="#857d69" stroke-width="0.55" fill="none"/><path d="M692.4 606.3L692.4 644.9" stroke="#857d69" stroke-width="0.55" fill="none"/><path d="M711.5 609.0L711.5 647.5" stroke="#857d69" stroke-width="0.55" fill="none"/><path d="M712.7 609.1L712.7 647.7" stroke="#6f6958" stroke-width="0.6" fill="none"/><polygon points="681.1,600.0 699.6,602.6 699.6,584.7 681.1,582.1" fill="#fbf9e2" stroke="none" stroke-width="0" stroke-linejoin="round" /><polygon points="704.7,603.4 723.3,606.0 723.3,588.0 704.7,585.4" fill="#f6f3da" stroke="none" stroke-width="0" stroke-linejoin="round" /><polygon points="681.9,641.7 689.7,642.8 689.7,606.9 681.9,605.8" fill="#fbf9e2" stroke="none" stroke-width="0" stroke-linejoin="round" /><polygon points="695.8,643.7 708.6,645.5 708.6,609.5 695.8,607.8" fill="#fbf9e2" stroke="none" stroke-width="0" stroke-linejoin="round" /><polygon points="714.9,646.3 722.3,647.4 722.3,611.5 714.9,610.4" fill="#f6f3da" stroke="none" stroke-width="0" stroke-linejoin="round" />
<polygon points="781.6,660.7 829.9,667.4 829.9,600.9 781.6,594.2" fill="#1b1918" stroke="#0c0c0c" stroke-width="0.9" stroke-linejoin="round" /><path d="M783.8 596.5L783.8 659.0" stroke="#857d69" stroke-width="0.55" fill="none"/><path d="M784.5 658.1L828.4 664.2" stroke="#857d69" stroke-width="0.55" fill="none"/><path d="M785.0 660.1L828.4 666.2" stroke="#6f6958" stroke-width="0.6" fill="none"/><path d="M785.0 617.6L828.9 623.7" stroke="#857d69" stroke-width="0.55" fill="none"/><path d="M807.4 599.8L807.4 619.1" stroke="#857d69" stroke-width="0.55" fill="none"/><path d="M797.8 621.0L797.8 659.6" stroke="#857d69" stroke-width="0.55" fill="none"/><path d="M816.8 623.7L816.8 662.3" stroke="#857d69" stroke-width="0.55" fill="none"/><path d="M818.0 623.9L818.0 662.4" stroke="#6f6958" stroke-width="0.6" fill="none"/><polygon points="786.4,614.8 805.0,617.4 805.0,599.4 786.4,596.8" fill="#fbf9e2" stroke="none" stroke-width="0" stroke-linejoin="round" /><polygon points="810.1,618.1 828.7,620.7 828.7,602.8 810.1,600.1" fill="#f6f3da" stroke="none" stroke-width="0" stroke-linejoin="round" /><polygon points="787.2,656.5 795.1,657.6 795.1,621.7 787.2,620.6" fill="#fbf9e2" stroke="none" stroke-width="0" stroke-linejoin="round" /><polygon points="801.1,658.4 813.9,660.2 813.9,624.3 801.1,622.5" fill="#fbf9e2" stroke="none" stroke-width="0" stroke-linejoin="round" /><polygon points="820.2,661.1 827.7,662.1 827.7,626.2 820.2,625.2" fill="#f6f3da" stroke="none" stroke-width="0" stroke-linejoin="round" />
<polygon points="886.9,675.4 935.2,682.2 935.2,615.7 886.9,608.9" fill="#1b1918" stroke="#0c0c0c" stroke-width="0.9" stroke-linejoin="round" /><path d="M889.1 611.2L889.1 673.7" stroke="#857d69" stroke-width="0.55" fill="none"/><path d="M889.8 672.8L933.8 679.0" stroke="#857d69" stroke-width="0.55" fill="none"/><path d="M890.3 674.9L933.8 681.0" stroke="#6f6958" stroke-width="0.6" fill="none"/><path d="M890.3 632.3L934.3 638.5" stroke="#857d69" stroke-width="0.55" fill="none"/><path d="M912.8 614.5L912.8 633.8" stroke="#857d69" stroke-width="0.55" fill="none"/><path d="M903.1 635.8L903.1 674.4" stroke="#857d69" stroke-width="0.55" fill="none"/><path d="M922.2 638.5L922.2 677.0" stroke="#857d69" stroke-width="0.55" fill="none"/><path d="M923.4 638.6L923.4 677.2" stroke="#6f6958" stroke-width="0.6" fill="none"/><polygon points="891.8,629.5 910.4,632.1 910.4,614.2 891.8,611.6" fill="#fbf9e2" stroke="none" stroke-width="0" stroke-linejoin="round" /><polygon points="915.4,632.9 934.0,635.5 934.0,617.5 915.4,614.9" fill="#f6f3da" stroke="none" stroke-width="0" stroke-linejoin="round" /><polygon points="892.6,671.2 900.5,672.3 900.5,636.4 892.6,635.3" fill="#fbf9e2" stroke="none" stroke-width="0" stroke-linejoin="round" /><polygon points="906.5,673.2 919.3,675.0 919.3,639.0 906.5,637.3" fill="#fbf9e2" stroke="none" stroke-width="0" stroke-linejoin="round" /><polygon points="925.6,675.8 933.1,676.9 933.1,641.0 925.6,639.9" fill="#f6f3da" stroke="none" stroke-width="0" stroke-linejoin="round" />
<polygon points="992.3,690.2 1040.6,696.9 1040.6,630.4 992.3,623.7" fill="#1b1918" stroke="#0c0c0c" stroke-width="0.9" stroke-linejoin="round" /><path d="M994.5 626.0L994.5 688.5" stroke="#857d69" stroke-width="0.55" fill="none"/><path d="M995.2 687.6L1039.2 693.7" stroke="#857d69" stroke-width="0.55" fill="none"/><path d="M995.7 689.6L1039.2 695.7" stroke="#6f6958" stroke-width="0.6" fill="none"/><path d="M995.7 647.1L1039.6 653.2" stroke="#857d69" stroke-width="0.55" fill="none"/><path d="M1018.1 629.3L1018.1 648.6" stroke="#857d69" stroke-width="0.55" fill="none"/><path d="M1008.5 650.5L1008.5 689.1" stroke="#857d69" stroke-width="0.55" fill="none"/><path d="M1027.6 653.2L1027.6 691.8" stroke="#857d69" stroke-width="0.55" fill="none"/><path d="M1028.8 653.4L1028.8 691.9" stroke="#6f6958" stroke-width="0.6" fill="none"/><polygon points="997.1,644.3 1015.7,646.9 1015.7,628.9 997.1,626.3" fill="#fbf9e2" stroke="none" stroke-width="0" stroke-linejoin="round" /><polygon points="1020.8,647.6 1039.4,650.2 1039.4,632.3 1020.8,629.6" fill="#f6f3da" stroke="none" stroke-width="0" stroke-linejoin="round" /><polygon points="998.0,686.0 1005.8,687.1 1005.8,651.2 998.0,650.1" fill="#fbf9e2" stroke="none" stroke-width="0" stroke-linejoin="round" /><polygon points="1011.9,687.9 1024.7,689.7 1024.7,653.8 1011.9,652.0" fill="#fbf9e2" stroke="none" stroke-width="0" stroke-linejoin="round" /><polygon points="1030.9,690.6 1038.4,691.6 1038.4,655.7 1030.9,654.7" fill="#f6f3da" stroke="none" stroke-width="0" stroke-linejoin="round" />
<polygon points="1097.7,704.9 1146.0,711.7 1146.0,645.2 1097.7,638.4" fill="#1b1918" stroke="#0c0c0c" stroke-width="0.9" stroke-linejoin="round" /><path d="M1099.8 640.7L1099.8 703.2" stroke="#857d69" stroke-width="0.55" fill="none"/><path d="M1100.6 702.3L1144.5 708.5" stroke="#857d69" stroke-width="0.55" fill="none"/><path d="M1101.0 704.4L1144.5 710.5" stroke="#6f6958" stroke-width="0.6" fill="none"/><path d="M1101.0 661.8L1145.0 668.0" stroke="#857d69" stroke-width="0.55" fill="none"/><path d="M1123.5 644.0L1123.5 663.3" stroke="#857d69" stroke-width="0.55" fill="none"/><path d="M1113.8 665.3L1113.8 703.9" stroke="#857d69" stroke-width="0.55" fill="none"/><path d="M1132.9 668.0L1132.9 706.5" stroke="#857d69" stroke-width="0.55" fill="none"/><path d="M1134.1 668.1L1134.1 706.7" stroke="#6f6958" stroke-width="0.6" fill="none"/><polygon points="1102.5,659.0 1121.1,661.6 1121.1,643.7 1102.5,641.1" fill="#fbf9e2" stroke="none" stroke-width="0" stroke-linejoin="round" /><polygon points="1126.2,662.4 1144.8,665.0 1144.8,647.0 1126.2,644.4" fill="#f6f3da" stroke="none" stroke-width="0" stroke-linejoin="round" /><polygon points="1103.3,700.7 1111.2,701.8 1111.2,665.9 1103.3,664.8" fill="#fbf9e2" stroke="none" stroke-width="0" stroke-linejoin="round" /><polygon points="1117.2,702.7 1130.0,704.5 1130.0,668.5 1117.2,666.8" fill="#fbf9e2" stroke="none" stroke-width="0" stroke-linejoin="round" /><polygon points="1136.3,705.3 1143.8,706.4 1143.8,670.5 1136.3,669.4" fill="#f6f3da" stroke="none" stroke-width="0" stroke-linejoin="round" />
<polygon points="1203.0,719.7 1251.3,726.4 1251.3,659.9 1203.0,653.2" fill="#1b1918" stroke="#0c0c0c" stroke-width="0.9" stroke-linejoin="round" /><path d="M1205.2 655.5L1205.2 718.0" stroke="#857d69" stroke-width="0.55" fill="none"/><path d="M1205.9 717.1L1249.9 723.2" stroke="#857d69" stroke-width="0.55" fill="none"/><path d="M1206.4 719.1L1249.9 725.2" stroke="#6f6958" stroke-width="0.6" fill="none"/><path d="M1206.4 676.6L1250.4 682.7" stroke="#857d69" stroke-width="0.55" fill="none"/><path d="M1228.9 658.8L1228.9 678.1" stroke="#857d69" stroke-width="0.55" fill="none"/><path d="M1219.2 680.0L1219.2 718.6" stroke="#857d69" stroke-width="0.55" fill="none"/><path d="M1238.3 682.7L1238.3 721.3" stroke="#857d69" stroke-width="0.55" fill="none"/><path d="M1239.5 682.9L1239.5 721.4" stroke="#6f6958" stroke-width="0.6" fill="none"/><polygon points="1207.8,673.8 1226.4,676.4 1226.4,658.4 1207.8,655.8" fill="#fbf9e2" stroke="none" stroke-width="0" stroke-linejoin="round" /><polygon points="1231.5,677.1 1250.1,679.7 1250.1,661.8 1231.5,659.1" fill="#f6f3da" stroke="none" stroke-width="0" stroke-linejoin="round" /><polygon points="1208.7,715.5 1216.5,716.6 1216.5,680.7 1208.7,679.6" fill="#fbf9e2" stroke="none" stroke-width="0" stroke-linejoin="round" /><polygon points="1222.6,717.4 1235.4,719.2 1235.4,683.3 1222.6,681.5" fill="#fbf9e2" stroke="none" stroke-width="0" stroke-linejoin="round" /><polygon points="1241.7,720.1 1249.1,721.1 1249.1,685.2 1241.7,684.2" fill="#f6f3da" stroke="none" stroke-width="0" stroke-linejoin="round" />
<polygon points="465.5,463.8 513.8,470.6 513.8,404.1 465.5,397.3" fill="#1b1918" stroke="#0c0c0c" stroke-width="0.9" stroke-linejoin="round" /><path d="M467.7 399.6L467.7 462.1" stroke="#857d69" stroke-width="0.55" fill="none"/><path d="M468.4 461.2L512.4 467.4" stroke="#857d69" stroke-width="0.55" fill="none"/><path d="M468.9 463.3L512.4 469.4" stroke="#6f6958" stroke-width="0.6" fill="none"/><path d="M468.9 420.7L512.8 426.9" stroke="#857d69" stroke-width="0.55" fill="none"/><path d="M491.3 402.9L491.3 422.2" stroke="#857d69" stroke-width="0.55" fill="none"/><path d="M481.7 424.2L481.7 462.8" stroke="#857d69" stroke-width="0.55" fill="none"/><path d="M500.8 426.9L500.8 465.4" stroke="#857d69" stroke-width="0.55" fill="none"/><path d="M502.0 427.0L502.0 465.6" stroke="#6f6958" stroke-width="0.6" fill="none"/><polygon points="470.3,417.9 488.9,420.5 488.9,402.6 470.3,400.0" fill="#fbf9e2" stroke="none" stroke-width="0" stroke-linejoin="round" /><polygon points="494.0,421.3 512.6,423.9 512.6,405.9 494.0,403.3" fill="#f6f3da" stroke="none" stroke-width="0" stroke-linejoin="round" /><polygon points="471.2,459.6 479.0,460.7 479.0,424.8 471.2,423.7" fill="#fbf9e2" stroke="none" stroke-width="0" stroke-linejoin="round" /><polygon points="485.1,461.6 497.9,463.4 497.9,427.4 485.1,425.7" fill="#fbf9e2" stroke="none" stroke-width="0" stroke-linejoin="round" /><polygon points="504.1,464.2 511.6,465.3 511.6,429.4 504.1,428.3" fill="#f6f3da" stroke="none" stroke-width="0" stroke-linejoin="round" />
<polygon points="570.9,478.6 619.2,485.3 619.2,418.8 570.9,412.1" fill="#1b1918" stroke="#0c0c0c" stroke-width="0.9" stroke-linejoin="round" /><path d="M573.0 414.4L573.0 476.9" stroke="#857d69" stroke-width="0.55" fill="none"/><path d="M573.8 476.0L617.7 482.1" stroke="#857d69" stroke-width="0.55" fill="none"/><path d="M574.2 478.0L617.7 484.1" stroke="#6f6958" stroke-width="0.6" fill="none"/><path d="M574.2 435.5L618.2 441.6" stroke="#857d69" stroke-width="0.55" fill="none"/><path d="M596.7 417.7L596.7 437.0" stroke="#857d69" stroke-width="0.55" fill="none"/><path d="M587.0 438.9L587.0 477.5" stroke="#857d69" stroke-width="0.55" fill="none"/><path d="M606.1 441.6L606.1 480.2" stroke="#857d69" stroke-width="0.55" fill="none"/><path d="M607.3 441.8L607.3 480.3" stroke="#6f6958" stroke-width="0.6" fill="none"/><polygon points="575.7,432.7 594.3,435.3 594.3,417.3 575.7,414.7" fill="#fbf9e2" stroke="none" stroke-width="0" stroke-linejoin="round" /><polygon points="599.4,436.0 618.0,438.6 618.0,420.7 599.4,418.0" fill="#f6f3da" stroke="none" stroke-width="0" stroke-linejoin="round" /><polygon points="576.5,474.4 584.4,475.5 584.4,439.6 576.5,438.5" fill="#fbf9e2" stroke="none" stroke-width="0" stroke-linejoin="round" /><polygon points="590.4,476.3 603.2,478.1 603.2,442.2 590.4,440.4" fill="#fbf9e2" stroke="none" stroke-width="0" stroke-linejoin="round" /><polygon points="609.5,479.0 617.0,480.0 617.0,444.1 609.5,443.1" fill="#f6f3da" stroke="none" stroke-width="0" stroke-linejoin="round" />
<polygon points="676.2,493.3 724.5,500.1 724.5,433.6 676.2,426.8" fill="#1b1918" stroke="#0c0c0c" stroke-width="0.9" stroke-linejoin="round" /><path d="M678.4 429.1L678.4 491.6" stroke="#857d69" stroke-width="0.55" fill="none"/><path d="M679.1 490.7L723.1 496.9" stroke="#857d69" stroke-width="0.55" fill="none"/><path d="M679.6 492.8L723.1 498.9" stroke="#6f6958" stroke-width="0.6" fill="none"/><path d="M679.6 450.2L723.6 456.4" stroke="#857d69" stroke-width="0.55" fill="none"/><path d="M702.1 432.4L702.1 451.7" stroke="#857d69" stroke-width="0.55" fill="none"/><path d="M692.4 453.7L692.4 492.3" stroke="#857d69" stroke-width="0.55" fill="none"/><path d="M711.5 456.4L711.5 494.9" stroke="#857d69" stroke-width="0.55" fill="none"/><path d="M712.7 456.5L712.7 495.1" stroke="#6f6958" stroke-width="0.6" fill="none"/><polygon points="681.1,447.4 699.6,450.0 699.6,432.1 681.1,429.5" fill="#fbf9e2" stroke="none" stroke-width="0" stroke-linejoin="round" /><polygon points="704.7,450.8 723.3,453.4 723.3,435.4 704.7,432.8" fill="#f6f3da" stroke="none" stroke-width="0" stroke-linejoin="round" /><polygon points="681.9,489.1 689.7,490.2 689.7,454.3 681.9,453.2" fill="#fbf9e2" stroke="none" stroke-width="0" stroke-linejoin="round" /><polygon points="695.8,491.1 708.6,492.9 708.6,456.9 695.8,455.2" fill="#fbf9e2" stroke="none" stroke-width="0" stroke-linejoin="round" /><polygon points="714.9,493.7 722.3,494.8 722.3,458.9 714.9,457.8" fill="#f6f3da" stroke="none" stroke-width="0" stroke-linejoin="round" />
<polygon points="781.6,508.1 829.9,514.8 829.9,448.3 781.6,441.6" fill="#1b1918" stroke="#0c0c0c" stroke-width="0.9" stroke-linejoin="round" /><path d="M783.8 443.9L783.8 506.4" stroke="#857d69" stroke-width="0.55" fill="none"/><path d="M784.5 505.5L828.4 511.6" stroke="#857d69" stroke-width="0.55" fill="none"/><path d="M785.0 507.5L828.4 513.6" stroke="#6f6958" stroke-width="0.6" fill="none"/><path d="M785.0 465.0L828.9 471.1" stroke="#857d69" stroke-width="0.55" fill="none"/><path d="M807.4 447.2L807.4 466.5" stroke="#857d69" stroke-width="0.55" fill="none"/><path d="M797.8 468.4L797.8 507.0" stroke="#857d69" stroke-width="0.55" fill="none"/><path d="M816.8 471.1L816.8 509.7" stroke="#857d69" stroke-width="0.55" fill="none"/><path d="M818.0 471.3L818.0 509.8" stroke="#6f6958" stroke-width="0.6" fill="none"/><polygon points="786.4,462.2 805.0,464.8 805.0,446.8 786.4,444.2" fill="#fbf9e2" stroke="none" stroke-width="0" stroke-linejoin="round" /><polygon points="810.1,465.5 828.7,468.1 828.7,450.2 810.1,447.5" fill="#f6f3da" stroke="none" stroke-width="0" stroke-linejoin="round" /><polygon points="787.2,503.9 795.1,505.0 795.1,469.1 787.2,468.0" fill="#fbf9e2" stroke="none" stroke-width="0" stroke-linejoin="round" /><polygon points="801.1,505.8 813.9,507.6 813.9,471.7 801.1,469.9" fill="#fbf9e2" stroke="none" stroke-width="0" stroke-linejoin="round" /><polygon points="820.2,508.5 827.7,509.5 827.7,473.6 820.2,472.6" fill="#f6f3da" stroke="none" stroke-width="0" stroke-linejoin="round" />
<polygon points="886.9,522.8 935.2,529.6 935.2,463.1 886.9,456.3" fill="#1b1918" stroke="#0c0c0c" stroke-width="0.9" stroke-linejoin="round" /><path d="M889.1 458.6L889.1 521.1" stroke="#857d69" stroke-width="0.55" fill="none"/><path d="M889.8 520.2L933.8 526.4" stroke="#857d69" stroke-width="0.55" fill="none"/><path d="M890.3 522.3L933.8 528.4" stroke="#6f6958" stroke-width="0.6" fill="none"/><path d="M890.3 479.7L934.3 485.9" stroke="#857d69" stroke-width="0.55" fill="none"/><path d="M912.8 461.9L912.8 481.2" stroke="#857d69" stroke-width="0.55" fill="none"/><path d="M903.1 483.2L903.1 521.8" stroke="#857d69" stroke-width="0.55" fill="none"/><path d="M922.2 485.9L922.2 524.4" stroke="#857d69" stroke-width="0.55" fill="none"/><path d="M923.4 486.0L923.4 524.6" stroke="#6f6958" stroke-width="0.6" fill="none"/><polygon points="891.8,476.9 910.4,479.5 910.4,461.6 891.8,459.0" fill="#fbf9e2" stroke="none" stroke-width="0" stroke-linejoin="round" /><polygon points="915.4,480.3 934.0,482.9 934.0,464.9 915.4,462.3" fill="#f6f3da" stroke="none" stroke-width="0" stroke-linejoin="round" /><polygon points="892.6,518.6 900.5,519.7 900.5,483.8 892.6,482.7" fill="#fbf9e2" stroke="none" stroke-width="0" stroke-linejoin="round" /><polygon points="906.5,520.6 919.3,522.4 919.3,486.4 906.5,484.7" fill="#fbf9e2" stroke="none" stroke-width="0" stroke-linejoin="round" /><polygon points="925.6,523.2 933.1,524.3 933.1,488.4 925.6,487.3" fill="#f6f3da" stroke="none" stroke-width="0" stroke-linejoin="round" />
<polygon points="992.3,537.6 1040.6,544.3 1040.6,477.8 992.3,471.1" fill="#1b1918" stroke="#0c0c0c" stroke-width="0.9" stroke-linejoin="round" /><path d="M994.5 473.4L994.5 535.9" stroke="#857d69" stroke-width="0.55" fill="none"/><path d="M995.2 535.0L1039.2 541.1" stroke="#857d69" stroke-width="0.55" fill="none"/><path d="M995.7 537.0L1039.2 543.1" stroke="#6f6958" stroke-width="0.6" fill="none"/><path d="M995.7 494.5L1039.6 500.6" stroke="#857d69" stroke-width="0.55" fill="none"/><path d="M1018.1 476.7L1018.1 496.0" stroke="#857d69" stroke-width="0.55" fill="none"/><path d="M1008.5 497.9L1008.5 536.5" stroke="#857d69" stroke-width="0.55" fill="none"/><path d="M1027.6 500.6L1027.6 539.2" stroke="#857d69" stroke-width="0.55" fill="none"/><path d="M1028.8 500.8L1028.8 539.3" stroke="#6f6958" stroke-width="0.6" fill="none"/><polygon points="997.1,491.7 1015.7,494.3 1015.7,476.3 997.1,473.7" fill="#fbf9e2" stroke="none" stroke-width="0" stroke-linejoin="round" /><polygon points="1020.8,495.0 1039.4,497.6 1039.4,479.7 1020.8,477.0" fill="#f6f3da" stroke="none" stroke-width="0" stroke-linejoin="round" /><polygon points="998.0,533.4 1005.8,534.5 1005.8,498.6 998.0,497.5" fill="#fbf9e2" stroke="none" stroke-width="0" stroke-linejoin="round" /><polygon points="1011.9,535.3 1024.7,537.1 1024.7,501.2 1011.9,499.4" fill="#fbf9e2" stroke="none" stroke-width="0" stroke-linejoin="round" /><polygon points="1030.9,538.0 1038.4,539.0 1038.4,503.1 1030.9,502.1" fill="#f6f3da" stroke="none" stroke-width="0" stroke-linejoin="round" />
<polygon points="1097.7,552.3 1146.0,559.1 1146.0,492.6 1097.7,485.8" fill="#1b1918" stroke="#0c0c0c" stroke-width="0.9" stroke-linejoin="round" /><path d="M1099.8 488.1L1099.8 550.6" stroke="#857d69" stroke-width="0.55" fill="none"/><path d="M1100.6 549.7L1144.5 555.9" stroke="#857d69" stroke-width="0.55" fill="none"/><path d="M1101.0 551.8L1144.5 557.9" stroke="#6f6958" stroke-width="0.6" fill="none"/><path d="M1101.0 509.2L1145.0 515.4" stroke="#857d69" stroke-width="0.55" fill="none"/><path d="M1123.5 491.4L1123.5 510.7" stroke="#857d69" stroke-width="0.55" fill="none"/><path d="M1113.8 512.7L1113.8 551.3" stroke="#857d69" stroke-width="0.55" fill="none"/><path d="M1132.9 515.4L1132.9 553.9" stroke="#857d69" stroke-width="0.55" fill="none"/><path d="M1134.1 515.5L1134.1 554.1" stroke="#6f6958" stroke-width="0.6" fill="none"/><polygon points="1102.5,506.4 1121.1,509.0 1121.1,491.1 1102.5,488.5" fill="#fbf9e2" stroke="none" stroke-width="0" stroke-linejoin="round" /><polygon points="1126.2,509.8 1144.8,512.4 1144.8,494.4 1126.2,491.8" fill="#f6f3da" stroke="none" stroke-width="0" stroke-linejoin="round" /><polygon points="1103.3,548.1 1111.2,549.2 1111.2,513.3 1103.3,512.2" fill="#fbf9e2" stroke="none" stroke-width="0" stroke-linejoin="round" /><polygon points="1117.2,550.1 1130.0,551.9 1130.0,515.9 1117.2,514.2" fill="#fbf9e2" stroke="none" stroke-width="0" stroke-linejoin="round" /><polygon points="1136.3,552.7 1143.8,553.8 1143.8,517.9 1136.3,516.8" fill="#f6f3da" stroke="none" stroke-width="0" stroke-linejoin="round" />
<polygon points="1203.0,567.1 1251.3,573.8 1251.3,507.3 1203.0,500.6" fill="#1b1918" stroke="#0c0c0c" stroke-width="0.9" stroke-linejoin="round" /><path d="M1205.2 502.9L1205.2 565.4" stroke="#857d69" stroke-width="0.55" fill="none"/><path d="M1205.9 564.5L1249.9 570.6" stroke="#857d69" stroke-width="0.55" fill="none"/><path d="M1206.4 566.5L1249.9 572.6" stroke="#6f6958" stroke-width="0.6" fill="none"/><path d="M1206.4 524.0L1250.4 530.1" stroke="#857d69" stroke-width="0.55" fill="none"/><path d="M1228.9 506.2L1228.9 525.5" stroke="#857d69" stroke-width="0.55" fill="none"/><path d="M1219.2 527.4L1219.2 566.0" stroke="#857d69" stroke-width="0.55" fill="none"/><path d="M1238.3 530.1L1238.3 568.7" stroke="#857d69" stroke-width="0.55" fill="none"/><path d="M1239.5 530.3L1239.5 568.8" stroke="#6f6958" stroke-width="0.6" fill="none"/><polygon points="1207.8,521.2 1226.4,523.8 1226.4,505.8 1207.8,503.2" fill="#fbf9e2" stroke="none" stroke-width="0" stroke-linejoin="round" /><polygon points="1231.5,524.5 1250.1,527.1 1250.1,509.2 1231.5,506.5" fill="#f6f3da" stroke="none" stroke-width="0" stroke-linejoin="round" /><polygon points="1208.7,562.9 1216.5,564.0 1216.5,528.1 1208.7,527.0" fill="#fbf9e2" stroke="none" stroke-width="0" stroke-linejoin="round" /><polygon points="1222.6,564.8 1235.4,566.6 1235.4,530.7 1222.6,528.9" fill="#fbf9e2" stroke="none" stroke-width="0" stroke-linejoin="round" /><polygon points="1241.7,567.5 1249.1,568.5 1249.1,532.6 1241.7,531.6" fill="#f6f3da" stroke="none" stroke-width="0" stroke-linejoin="round" />
<polygon points="1434.6,472.3 1460.8,466.3 1460.8,530.6 1434.6,536.6" fill="#2a2a28" stroke="#0c0c0c" stroke-width="1.0" stroke-linejoin="round" /><polygon points="1436.1,474.0 1457.3,469.1 1457.3,489.1 1436.1,494.0" fill="#7d7f76" stroke="none" stroke-width="0" stroke-linejoin="round" /><polygon points="1436.1,480.0 1457.3,475.1 1457.3,481.1 1436.1,486.0" fill="#55574f" stroke="none" stroke-width="0" stroke-linejoin="round" /><polygon points="1436.1,494.0 1457.3,489.1 1457.3,491.1 1436.1,496.0" fill="#d8d4b8" stroke="none" stroke-width="0" stroke-linejoin="round" /><polygon points="1436.6,497.8 1442.6,496.5 1442.6,530.5 1436.6,531.8" fill="#6c6e66" stroke="none" stroke-width="0" stroke-linejoin="round" /><polygon points="1444.6,496.0 1449.6,494.9 1449.6,528.9 1444.6,530.0" fill="#8a8c82" stroke="none" stroke-width="0" stroke-linejoin="round" /><polygon points="1451.6,494.4 1457.3,493.1 1457.3,527.1 1451.6,528.4" fill="#5e6058" stroke="none" stroke-width="0" stroke-linejoin="round" />
<polygon points="1434.6,624.9 1460.8,618.9 1460.8,683.2 1434.6,689.2" fill="#2a2a28" stroke="#0c0c0c" stroke-width="1.0" stroke-linejoin="round" /><polygon points="1436.1,626.6 1457.3,621.7 1457.3,641.7 1436.1,646.6" fill="#7d7f76" stroke="none" stroke-width="0" stroke-linejoin="round" /><polygon points="1436.1,632.6 1457.3,627.7 1457.3,633.7 1436.1,638.6" fill="#55574f" stroke="none" stroke-width="0" stroke-linejoin="round" /><polygon points="1436.1,646.6 1457.3,641.7 1457.3,643.7 1436.1,648.6" fill="#d8d4b8" stroke="none" stroke-width="0" stroke-linejoin="round" /><polygon points="1436.6,650.4 1442.6,649.1 1442.6,683.1 1436.6,684.4" fill="#6c6e66" stroke="none" stroke-width="0" stroke-linejoin="round" /><polygon points="1444.6,648.6 1449.6,647.5 1449.6,681.5 1444.6,682.6" fill="#8a8c82" stroke="none" stroke-width="0" stroke-linejoin="round" /><polygon points="1451.6,647.0 1457.3,645.7 1457.3,679.7 1451.6,681.0" fill="#5e6058" stroke="none" stroke-width="0" stroke-linejoin="round" />
<polygon points="1385.4,812.0 1408.8,806.5 1408.8,883.9 1385.4,889.9" fill="#2b2b2b" stroke="#111" stroke-width="0.8" stroke-linejoin="round" />
<defs><linearGradient id="dg" x1="0" y1="0" x2="1" y2="0"><stop offset="0" stop-color="#a9aaa2"/><stop offset=".5" stop-color="#d3d3c8"/><stop offset="1" stop-color="#a5a69e"/></linearGradient></defs>
<polygon points="1387.6,814.3 1405.8,810.0 1405.8,884.7 1387.6,889.3" fill="url(#dg)" stroke="none" stroke-width="0" stroke-linejoin="round" />
<path d="M1388.5 851.5h3v1.2h-2v4" stroke="#222" stroke-width="1" fill="none"/>
<polygon points="1377.0,906.0 1425.5,916.0 1425.5,921.2 1377.0,911.2" fill="#c3c5be" stroke="#111" stroke-width="0.8" stroke-linejoin="round" /><polygon points="1425.5,916.0 1494.3,897.3 1494.3,902.5 1425.5,921.2" fill="#b9bab1" stroke="#111" stroke-width="0.8" stroke-linejoin="round" /><polygon points="1377.0,906.0 1445.8,887.3 1494.3,897.3 1425.5,916.0" fill="#d3d5d1" stroke="#111" stroke-width="0.8" stroke-linejoin="round" /><polygon points="1372.5,899.0 1422.4,907.7 1422.4,912.9 1372.5,904.2" fill="#c5c7c0" stroke="#111" stroke-width="0.8" stroke-linejoin="round" /><polygon points="1422.4,907.7 1478.4,892.6 1478.4,897.8 1422.4,912.9" fill="#bbbcb3" stroke="#111" stroke-width="0.8" stroke-linejoin="round" /><polygon points="1372.5,899.0 1428.5,883.9 1478.4,892.6 1422.4,907.7" fill="#d6d8d4" stroke="#111" stroke-width="0.8" stroke-linejoin="round" /><polygon points="1374.7,892.2 1420.4,899.3 1420.4,904.8 1374.7,897.7" fill="#c7c9c2" stroke="#111" stroke-width="0.8" stroke-linejoin="round" /><polygon points="1420.4,899.3 1463.3,887.4 1463.3,892.9 1420.4,904.8" fill="#bdbeb5" stroke="#111" stroke-width="0.8" stroke-linejoin="round" /><polygon points="1374.7,892.2 1417.6,880.3 1463.3,887.4 1420.4,899.3" fill="#d9dbd7" stroke="#111" stroke-width="0.8" stroke-linejoin="round" />
<polygon points="1586.5,838.0 1592.6,838.9 1592.6,486.9 1586.5,486.0" fill="url(#pb)" stroke="#111" stroke-width="0.9" stroke-linejoin="round" /><polygon points="1592.6,838.9 1611.7,833.7 1611.7,481.7 1592.6,486.9" fill="#ffffff" stroke="#222" stroke-width="0.8" stroke-linejoin="round" /><polygon points="1586.5,486.0 1592.6,486.9 1611.7,481.7 1605.6,480.8" fill="#fbfbee" stroke="#333" stroke-width="0.6" stroke-linejoin="round" />
<polygon points="1467.5,870.2 1473.5,871.0 1473.5,519.0 1467.5,518.2" fill="url(#pb)" stroke="#111" stroke-width="0.9" stroke-linejoin="round" /><polygon points="1473.5,871.0 1491.6,866.0 1491.6,514.0 1473.5,519.0" fill="#ffffff" stroke="#222" stroke-width="0.8" stroke-linejoin="round" /><polygon points="1467.5,518.2 1473.5,519.0 1491.6,514.0 1485.6,513.2" fill="#fbfbee" stroke="#333" stroke-width="0.6" stroke-linejoin="round" />
<polygon points="1413.6,885.2 1419.6,886.0 1419.6,534.0 1413.6,533.2" fill="url(#pb)" stroke="#111" stroke-width="0.9" stroke-linejoin="round" /><polygon points="1419.6,886.0 1437.4,881.1 1437.4,529.1 1419.6,534.0" fill="#ffffff" stroke="#222" stroke-width="0.8" stroke-linejoin="round" /><polygon points="1413.6,533.2 1419.6,534.0 1437.4,529.1 1431.4,528.3" fill="#fbfbee" stroke="#333" stroke-width="0.6" stroke-linejoin="round" />
<polygon points="1377.0,906.0 1425.5,916.0 1425.5,921.2 1377.0,911.2" fill="#c3c5be" stroke="#111" stroke-width="0.8" stroke-linejoin="round" /><polygon points="1425.5,916.0 1494.3,897.3 1494.3,902.5 1425.5,921.2" fill="#b9bab1" stroke="#111" stroke-width="0.8" stroke-linejoin="round" /><polygon points="1377.0,906.0 1445.8,887.3 1494.3,897.3 1425.5,916.0" fill="#d3d5d1" stroke="#111" stroke-width="0.8" stroke-linejoin="round" /><polygon points="1372.5,899.0 1422.4,907.7 1422.4,912.9 1372.5,904.2" fill="#c5c7c0" stroke="#111" stroke-width="0.8" stroke-linejoin="round" /><polygon points="1422.4,907.7 1478.4,892.6 1478.4,897.8 1422.4,912.9" fill="#bbbcb3" stroke="#111" stroke-width="0.8" stroke-linejoin="round" /><polygon points="1372.5,899.0 1428.5,883.9 1478.4,892.6 1422.4,907.7" fill="#d6d8d4" stroke="#111" stroke-width="0.8" stroke-linejoin="round" /><polygon points="1374.7,892.2 1420.4,899.3 1420.4,904.8 1374.7,897.7" fill="#c7c9c2" stroke="#111" stroke-width="0.8" stroke-linejoin="round" /><polygon points="1420.4,899.3 1463.3,887.4 1463.3,892.9 1420.4,904.8" fill="#bdbeb5" stroke="#111" stroke-width="0.8" stroke-linejoin="round" /><polygon points="1374.7,892.2 1417.6,880.3 1463.3,887.4 1420.4,899.3" fill="#d9dbd7" stroke="#111" stroke-width="0.8" stroke-linejoin="round" />
<defs><radialGradient id="sh" cx=".5" cy=".5" r=".5"><stop offset="0" stop-color="#7d807d" stop-opacity=".55"/><stop offset="1" stop-color="#7d807d" stop-opacity="0"/></radialGradient></defs>
<ellipse cx="449.4" cy="806.9" rx="13" ry="4.5" fill="url(#sh)" transform="rotate(8 445.4 805.9)"/>
<ellipse cx="555.0" cy="821.7" rx="13" ry="4.5" fill="url(#sh)" transform="rotate(8 551.0 820.7)"/>
<ellipse cx="660.7" cy="836.5" rx="13" ry="4.5" fill="url(#sh)" transform="rotate(8 656.7 835.5)"/>
<ellipse cx="766.3" cy="851.2" rx="13" ry="4.5" fill="url(#sh)" transform="rotate(8 762.3 850.2)"/>
<ellipse cx="871.9" cy="866.0" rx="13" ry="4.5" fill="url(#sh)" transform="rotate(8 867.9 865.0)"/>
<ellipse cx="977.5" cy="880.8" rx="13" ry="4.5" fill="url(#sh)" transform="rotate(8 973.5 879.8)"/>
<ellipse cx="1083.2" cy="895.6" rx="13" ry="4.5" fill="url(#sh)" transform="rotate(8 1079.2 894.6)"/>
<ellipse cx="1188.8" cy="910.4" rx="13" ry="4.5" fill="url(#sh)" transform="rotate(8 1184.8 909.4)"/>
<polygon points="444.1,802.7 448.5,801.5 448.5,450.0 444.1,451.2" fill="#fafaeb" stroke="#111" stroke-width="0.8" stroke-linejoin="round" /><polygon points="418.4,799.1 444.1,802.7 444.1,451.2 418.4,447.6" fill="url(#pf)" stroke="#111" stroke-width="0.9" stroke-linejoin="round" /><polygon points="418.4,447.6 444.1,451.2 448.5,450.0 422.8,446.4" fill="#f3f3e4" stroke="#333" stroke-width="0.6" stroke-linejoin="round" />
<polygon points="549.7,817.5 554.1,816.3 554.1,464.8 549.7,466.0" fill="#fafaeb" stroke="#111" stroke-width="0.8" stroke-linejoin="round" /><polygon points="524.0,813.9 549.7,817.5 549.7,466.0 524.0,462.4" fill="url(#pf)" stroke="#111" stroke-width="0.9" stroke-linejoin="round" /><polygon points="524.0,462.4 549.7,466.0 554.1,464.8 528.4,461.2" fill="#f3f3e4" stroke="#333" stroke-width="0.6" stroke-linejoin="round" />
<polygon points="655.4,832.3 659.8,831.1 659.8,479.6 655.4,480.8" fill="#fafaeb" stroke="#111" stroke-width="0.8" stroke-linejoin="round" /><polygon points="629.7,828.7 655.4,832.3 655.4,480.8 629.7,477.2" fill="url(#pf)" stroke="#111" stroke-width="0.9" stroke-linejoin="round" /><polygon points="629.7,477.2 655.4,480.8 659.8,479.6 634.1,476.0" fill="#f3f3e4" stroke="#333" stroke-width="0.6" stroke-linejoin="round" />
<polygon points="761.0,847.1 765.4,845.9 765.4,494.4 761.0,495.6" fill="#fafaeb" stroke="#111" stroke-width="0.8" stroke-linejoin="round" /><polygon points="735.3,843.5 761.0,847.1 761.0,495.6 735.3,492.0" fill="url(#pf)" stroke="#111" stroke-width="0.9" stroke-linejoin="round" /><polygon points="735.3,492.0 761.0,495.6 765.4,494.4 739.7,490.8" fill="#f3f3e4" stroke="#333" stroke-width="0.6" stroke-linejoin="round" />
<polygon points="866.6,861.9 871.0,860.6 871.0,509.1 866.6,510.4" fill="#fafaeb" stroke="#111" stroke-width="0.8" stroke-linejoin="round" /><polygon points="840.9,858.3 866.6,861.9 866.6,510.4 840.9,506.8" fill="url(#pf)" stroke="#111" stroke-width="0.9" stroke-linejoin="round" /><polygon points="840.9,506.8 866.6,510.4 871.0,509.1 845.3,505.5" fill="#f3f3e4" stroke="#333" stroke-width="0.6" stroke-linejoin="round" />
<polygon points="972.2,876.6 976.6,875.4 976.6,523.9 972.2,525.1" fill="#fafaeb" stroke="#111" stroke-width="0.8" stroke-linejoin="round" /><polygon points="946.5,873.0 972.2,876.6 972.2,525.1 946.5,521.5" fill="url(#pf)" stroke="#111" stroke-width="0.9" stroke-linejoin="round" /><polygon points="946.5,521.5 972.2,525.1 976.6,523.9 950.9,520.3" fill="#f3f3e4" stroke="#333" stroke-width="0.6" stroke-linejoin="round" />
<polygon points="1077.9,891.4 1082.3,890.2 1082.3,538.7 1077.9,539.9" fill="#fafaeb" stroke="#111" stroke-width="0.8" stroke-linejoin="round" /><polygon points="1052.2,887.8 1077.9,891.4 1077.9,539.9 1052.2,536.3" fill="url(#pf)" stroke="#111" stroke-width="0.9" stroke-linejoin="round" /><polygon points="1052.2,536.3 1077.9,539.9 1082.3,538.7 1056.6,535.1" fill="#f3f3e4" stroke="#333" stroke-width="0.6" stroke-linejoin="round" />
<polygon points="1183.5,906.2 1187.9,905.0 1187.9,553.5 1183.5,554.7" fill="#fafaeb" stroke="#111" stroke-width="0.8" stroke-linejoin="round" /><polygon points="1157.8,902.6 1183.5,906.2 1183.5,554.7 1157.8,551.1" fill="url(#pf)" stroke="#111" stroke-width="0.9" stroke-linejoin="round" /><polygon points="1157.8,551.1 1183.5,554.7 1187.9,553.5 1162.2,549.9" fill="#f3f3e4" stroke="#333" stroke-width="0.6" stroke-linejoin="round" />
<polygon points="1289.2,922.5 1307.5,917.3 1307.5,564.6 1289.2,569.8" fill="#ffffff" stroke="#222" stroke-width="0.8" stroke-linejoin="round" />
<polygon points="1263.4,918.9 1289.2,922.5 1289.2,569.8 1263.4,566.2" fill="url(#pf)" stroke="#333" stroke-width="0.7" stroke-linejoin="round" />
<polygon points="1263.4,566.2 1289.2,573.4 1289.2,569.8" fill="#f3f3e4" stroke="#333" stroke-width="0.5" stroke-linejoin="round" />
<polygon points="403.5,339.8 1291.4,464.1 1626.4,371.6 1601.2,367.9 1287.4,455.6 429.7,335.8 441.2,331.7" fill="#8b8e87" stroke="#222" stroke-width="0.7" stroke-linejoin="round" /><polygon points="403.5,339.8 1291.4,464.1 1291.4,470.1 403.5,345.8" fill="#5b5d59" stroke="#1a1a1a" stroke-width="0.8" stroke-linejoin="round" /><polygon points="1291.4,464.1 1626.4,371.6 1626.4,377.6 1291.4,470.1" fill="#8e9088" stroke="#222" stroke-width="0.8" stroke-linejoin="round" /><path d="M417.5 338.8L1289.4 461.1" stroke="#2a2a28" stroke-width=".8"/><path d="M1290.4 460.9L1614.4 368.0" stroke="#3a3a38" stroke-width=".8"/><polygon points="429.7,335.8 1287.4,455.6 1287.4,458.2 429.7,338.4" fill="#9c3a32" stroke="#3a1412" stroke-width="0.6" stroke-linejoin="round" /><polygon points="1287.4,455.6 1600.2,369.1 1600.2,371.7 1287.4,458.2" fill="#e27c6e" stroke="#3a1412" stroke-width="0.6" stroke-linejoin="round" /><polygon points="429.7,335.8 805.4,202.3 1226.6,261.4 1287.4,455.6" fill="#cd5c4e" stroke="#111" stroke-width="0.9" stroke-linejoin="round" /><polygon points="429.7,335.8 805.4,202.3 1226.6,261.4 1287.4,455.6" fill="url(#rt)" stroke="none" stroke-width="0" stroke-linejoin="round" /><polygon points="1226.6,261.4 1287.4,455.6 1600.2,369.1" fill="#e26c5d" stroke="#111" stroke-width="0.9" stroke-linejoin="round" /><polygon points="1226.6,261.4 1287.4,455.6 1600.2,369.1" fill="url(#rt2)" stroke="none" stroke-width="0" stroke-linejoin="round" />
<text x="746.2" y="485.2" font-family="'Liberation Sans','Noto Sans CJK SC',sans-serif" font-weight="bold" font-size="96" fill="#5a5a5a" fill-opacity="0.15" textLength="430" lengthAdjust="spacingAndGlyphs">BIM<tspan font-size="89">资源网</tspan></text>
<text x="577.2" y="591.7" font-family="'Liberation Sans','Noto Sans CJK SC',sans-serif" font-weight="bold" font-size="92" fill="#5a5a5a" fill-opacity="0.15" textLength="767" lengthAdjust="spacingAndGlyphs">www.bimzyw.com</text>
<text x="744.0" y="483.0" font-family="'Liberation Sans','Noto Sans CJK SC',sans-serif" font-weight="bold" font-size="96" fill="#ffffff" fill-opacity="0.3" textLength="430" lengthAdjust="spacingAndGlyphs">BIM<tspan font-size="89">资源网</tspan></text>
<text x="575.0" y="589.5" font-family="'Liberation Sans','Noto Sans CJK SC',sans-serif" font-weight="bold" font-size="92" fill="#ffffff" fill-opacity="0.3" textLength="767" lengthAdjust="spacingAndGlyphs">www.bimzyw.com</text>
</svg>
<svg width="0" height="0" style="position:absolute"><defs><linearGradient id="g1" x1="0" y1="0" x2="0" y2="1"><stop offset="0" stop-color="#f7f8f9"/><stop offset="1" stop-color="#d9dde2"/></linearGradient><linearGradient id="g2" x1="0" y1="0" x2="1" y2="1"><stop offset="0" stop-color="#f4f5f6"/><stop offset="1" stop-color="#c9ced5"/></linearGradient><linearGradient id="g3" x1="0" y1="0" x2="0" y2="1"><stop offset="0" stop-color="#7b8798"/><stop offset="1" stop-color="#aab2bf"/></linearGradient><linearGradient id="g4" x1="0" y1="0" x2="1" y2="0"><stop offset="0" stop-color="#f4f5f6"/><stop offset=".5" stop-color="#c4c9cf"/><stop offset="1" stop-color="#f0f1f2"/></linearGradient><linearGradient id="gy" x1="0" y1="0" x2="0" y2="1"><stop offset="0" stop-color="#ffdf80"/><stop offset="1" stop-color="#ffd25a"/></linearGradient><pattern id="ck" width="6" height="6" patternUnits="userSpaceOnUse" patternTransform="skewX(-40)"><rect width="6" height="6" fill="#5aa8ee"/><rect width="3" height="3" fill="#c4e2fa"/><rect x="3" y="3" width="3" height="3" fill="#c4e2fa"/></pattern><pattern id="ht" width="2.2" height="2.2" patternUnits="userSpaceOnUse" patternTransform="rotate(-45)"><rect width="2.2" height="2.2" fill="#d6d9dc"/><rect width=".9" height="2.2" fill="#90969c"/></pattern></defs></svg>
<svg class="a" style="left:13px;top:30px" width="16" height="24" viewBox="0 0 16 24"><path d="M2.5 2L2.5 17.5L6.3 14.2L9 20.5L11.3 19.5L8.6 13.3L13.5 13Z" fill="#fff" stroke="#222" stroke-width="1.1" stroke-linejoin="round"/></svg>
<svg class="a" style="left:50.8px;top:26px;overflow:visible" width="32" height="32" viewBox="0 0 32 32"><path d="M 2.40 3.46 Q 12.16 10.93 25.94 11.50 L 25.94 30.45 Q 9.87 29.30 2.40 20.69 Z" fill="url(#g1)" stroke="#41464c" stroke-width="1.3" stroke-linejoin="round" /><path d="M 2.40 3.46 L 7.00 1.97 Q 17.91 8.06 29.16 9.55 L 25.94 11.50 Q 12.16 10.93 2.40 3.46 Z" fill="#fbfbfb" stroke="#41464c" stroke-width="1.3" stroke-linejoin="round" /><path d="M 25.94 11.50 L 29.16 9.55 L 29.16 26.77 L 25.94 30.45 Z" fill="#c2c7ce" stroke="#41464c" stroke-width="1.3" stroke-linejoin="round" /></svg>
<svg class="a" style="left:88.5px;top:26px;overflow:visible" width="32" height="32" viewBox="0 0 32 32"><path d="M 6.62 1.17 L 24.99 1.17 L 24.99 23.56 L 6.62 23.56 Z" fill="url(#g3)" stroke="#41464c" stroke-width="1.2" stroke-linejoin="round" /><path d="M 6.04 2.32 L 21.54 9.20 L 21.54 30.45 L 6.04 22.98 Z" fill="url(#g2)" stroke="#41464c" stroke-width="1.3" stroke-linejoin="round" /><path d="M 21.54 9.20 L 22.92 8.86 L 22.92 29.53 L 21.54 30.45 Z" fill="#b8bdc4" stroke="#41464c" stroke-width="1" stroke-linejoin="round" /><circle cx="17.5" cy="20.1" r="1.6" fill="#fff" stroke="#41464c" stroke-width="1"/></svg>
<svg class="a" style="left:127.6px;top:26px;overflow:visible" width="32" height="32" viewBox="0 0 32 32"><path d="M 3.68 2.32 L 27.80 2.32 L 27.80 26.77 L 3.68 26.77 Z" fill="#f5f6f7" stroke="#41464c" stroke-width="1.3" stroke-linejoin="round" /><path d="M 6.56 5.19 L 15.17 5.19 L 15.17 13.22 L 6.56 13.22 Z" fill="url(#g3)" stroke="#8a93a0" stroke-width="0.6" stroke-linejoin="round" /><path d="M 16.89 5.19 L 25.50 5.19 L 25.50 13.22 L 16.89 13.22 Z" fill="url(#g3)" stroke="#8a93a0" stroke-width="0.6" stroke-linejoin="round" /><path d="M 6.56 14.95 L 15.17 14.95 L 15.17 23.56 L 6.56 23.56 Z" fill="url(#g3)" stroke="#8a93a0" stroke-width="0.6" stroke-linejoin="round" /><path d="M 16.89 14.95 L 25.50 14.95 L 25.50 23.56 L 16.89 23.56 Z" fill="url(#g3)" stroke="#8a93a0" stroke-width="0.6" stroke-linejoin="round" /><path d="M 1.96 26.77 L 30.09 26.77 L 28.14 30.22 L 4.03 30.22 Z" fill="#eceef0" stroke="#41464c" stroke-width="1.3" stroke-linejoin="round" /></svg>
<svg class="a" style="left:170.0px;top:26px;overflow:visible" width="32" height="32" viewBox="0 0 32 32"><path d="M 2.05 9.20 L 7.79 2.89 L 29.03 2.89 L 29.03 24.13 L 23.29 30.22 L 2.05 30.22 Z" fill="#e3e6ea" stroke="#41464c" stroke-width="1.4" stroke-linejoin="round" /><path d="M 2.05 9.20 L 7.79 2.89 L 20.42 2.89 L 14.91 9.20 Z" fill="#f8f9fa" stroke="#41464c" stroke-width="1" stroke-linejoin="round" /><path d="M 23.29 9.20 L 29.03 2.89 L 29.03 24.13 L 23.29 30.22 Z" fill="#bfc5cc" stroke="#41464c" stroke-width="1" stroke-linejoin="round" /><path d="M 14.91 9.20 L 20.42 2.89 L 23.29 2.89 L 23.29 9.20 L 17.55 9.20 L 17.55 20.69 L 2.05 20.69 L 2.05 22.98 L 14.91 22.98 L 14.91 9.20" fill="#f2f3f5" stroke="#41464c" stroke-width="1" stroke-linejoin="round" /><path d="M 2.05 9.20 L 14.91 9.20 L 14.91 20.69 L 2.05 20.69 Z" fill="#e6e9ec" stroke="#41464c" stroke-width="1" stroke-linejoin="round" /></svg>
<svg class="a" style="left:211.8px;top:26px;overflow:visible" width="32" height="32" viewBox="0 0 32 32"><path d="M 10.77 5.76 Q 10.77 2.32 16.28 2.32 Q 22.02 2.32 22.02 5.76 L 22.02 27.00 Q 22.02 30.22 16.28 30.22 Q 10.77 30.22 10.77 27.00 Z" fill="url(#g4)" stroke="#41464c" stroke-width="1.3" stroke-linejoin="round" /></svg>
<svg class="a" style="left:255.2px;top:26px;overflow:visible" width="32" height="32" viewBox="0 0 32 32"><path d="M 1.06 2.26 L 29.51 2.26 L 29.51 16.22 L 15.02 16.22 L 15.02 30.32 L 1.06 30.32 Z" fill="url(#g2)" stroke="#33373c" stroke-width="1.6" stroke-linejoin="round" /><path d="M 1.06 2.26 L 8.11 9.31 L 22.46 9.31 L 29.51 2.26 M 22.46 9.31 L 29.51 16.22 M 8.11 9.31 L 8.11 23.40 L 1.06 30.32 M 8.11 23.40 L 15.02 30.32" fill="none" stroke="#8c9198" stroke-width="0.9" stroke-linejoin="round" /><path d="M 8.11 9.31 L 22.46 9.31 L 29.51 16.22 L 15.02 16.22 L 15.02 30.32 L 8.11 23.40 Z" fill="#b6bbc2" stroke="none" stroke-width="0" stroke-linejoin="round" opacity=".75"/><path d="M 1.06 2.26 L 8.11 9.31 L 8.11 23.40 L 1.06 30.32 Z" fill="#fafafa" stroke="none" stroke-width="0" stroke-linejoin="round" opacity=".8"/></svg>
<svg class="a" style="left:298.6px;top:26px;overflow:visible" width="32" height="32" viewBox="0 0 32 32"><path d="M 9.46 2.26 L 30.99 2.26 L 30.99 22.10 L 9.46 22.10 Z" fill="#e6e7e9" stroke="#8f9499" stroke-width="0.9" stroke-linejoin="round" /><path d="M 1.63 10.35 L 9.46 2.26 L 9.46 22.10 L 1.63 29.66 Z" fill="#c3c6ca" stroke="#8f9499" stroke-width="0.9" stroke-linejoin="round" /><path d="M 1.63 14.27 L 9.46 6.44 L 30.99 6.44 L 23.16 14.27 Z" fill="url(#ck)" stroke="#1b6fd6" stroke-width="1.3" stroke-linejoin="round" /></svg>
<svg class="a" style="left:343.0px;top:26px;overflow:visible" width="32" height="32" viewBox="0 0 32 32"><path d="M 9.43 2.26 L 30.30 2.26 L 30.30 19.49 L 9.43 19.49 Z" fill="#e6e7e9" stroke="#8f9499" stroke-width="0.9" stroke-linejoin="round" /><path d="M 0.95 11.01 L 9.43 2.26 L 9.43 19.49 L 0.95 27.97 Z" fill="#c3c6ca" stroke="#8f9499" stroke-width="0.9" stroke-linejoin="round" /><path d="M 0.95 27.97 L 22.47 27.97 L 22.47 31.23 L 0.95 31.23 Z" fill="#b5d8f5" stroke="#1b6fd6" stroke-width="1.2" stroke-linejoin="round" /><path d="M 22.47 27.97 L 30.30 19.49 L 30.30 22.75 L 22.47 31.23 Z" fill="#7ab8ee" stroke="#1b6fd6" stroke-width="1.2" stroke-linejoin="round" /><path d="M 0.95 27.97 L 9.43 19.49 L 30.30 19.49 L 22.47 27.97 Z" fill="url(#ck)" stroke="#1b6fd6" stroke-width="1.3" stroke-linejoin="round" /></svg>
<svg class="a" style="left:385.8px;top:26px;overflow:visible" width="32" height="32" viewBox="0 0 32 32"><path d="M 1.47 1.87 L 30.56 1.87 L 30.56 21.44 L 23.65 29.27 L 23.65 8.40 Z" fill="#f1f2f3" stroke="#2b2f33" stroke-width="1.3" stroke-linejoin="round" /><path d="M 23.65 8.40 L 30.56 1.87" fill="none" stroke="#2b2f33" stroke-width="1.2" stroke-linejoin="round" /><path d="M 1.47 1.87 Q 9.03 8.40 23.65 8.40 L 23.65 29.27 Q 9.03 28.62 1.47 22.10 Z" fill="#e9edf2" stroke="#1b6fd6" stroke-width="1.3" stroke-linejoin="round" /><path d="M 1.47 8.66 Q 9.03 15.18 23.65 15.31 M 1.47 15.57 Q 9.03 21.84 23.65 22.36 M 6.42 5.13 L 6.42 25.75 M 11.64 7.09 L 11.64 27.71 M 17.51 8.00 L 17.51 28.88" fill="none" stroke="#1b6fd6" stroke-width="1.1" stroke-linejoin="round" /></svg>
<svg class="a" style="left:423.5px;top:26px;overflow:visible" width="32" height="32" viewBox="0 0 32 32"><path d="M 2.91 4.74 L 29.14 4.74 L 29.14 27.97 L 2.91 27.97 Z" fill="#ececed" stroke="#4b5056" stroke-width="1.3" stroke-linejoin="round" /><path d="M 2.91 20.79 L 29.14 20.79 L 29.14 27.97 L 2.91 27.97 Z" fill="#fbfbfb" stroke="none" stroke-width="0" stroke-linejoin="round" /><path d="M 2.91 4.74 L 29.14 4.74 L 29.14 27.97 L 2.91 27.97 Z" fill="none" stroke="#4b5056" stroke-width="1.3" stroke-linejoin="round" /><path d="M 15.96 4.74 L 15.96 27.97 M 2.91 12.31 L 29.14 12.31 M 2.91 20.79 L 29.14 20.79" fill="none" stroke="#2f86e6" stroke-width="1.1" stroke-linejoin="round" /></svg>
<svg class="a" style="left:461.6px;top:26px;overflow:visible" width="32" height="32" viewBox="0 0 32 32"><path d="M 3.95 4.74 L 29.14 4.74 L 29.14 27.97 L 3.95 27.97 Z" fill="#ececed" stroke="#4b5056" stroke-width="1.3" stroke-linejoin="round" /><path d="M 3.95 22.10 L 29.14 22.10 L 29.14 27.97 L 3.95 27.97 Z" fill="#fbfbfb" stroke="none" stroke-width="0" stroke-linejoin="round" /><path d="M 3.95 4.74 L 29.14 4.74 L 29.14 27.97 L 3.95 27.97 Z" fill="none" stroke="#4b5056" stroke-width="1.3" stroke-linejoin="round" /><path d="M 5.00 11.01 L 28.22 11.01 L 28.22 13.61 L 5.00 13.61 Z M 5.00 19.49 L 28.22 19.49 L 28.22 22.10 L 5.00 22.10 Z" fill="#a9d2f7" stroke="#1b6fd6" stroke-width="1.1" stroke-linejoin="round" /><path d="M 15.17 5.13 L 17.78 5.13 L 17.78 27.58 L 15.17 27.58 Z" fill="#a9d2f7" stroke="#1b6fd6" stroke-width="1.1" stroke-linejoin="round" /></svg>
<svg class="a" style="left:521.7px;top:26px;overflow:visible" width="32" height="32" viewBox="0 0 32 32"><path d="M 2.41 21.14 L 26.82 21.14 L 26.82 23.47 L 2.41 23.47 Z" fill="#ececec" stroke="#9a9ea3" stroke-width="0.8" stroke-linejoin="round" /><path d="M 2.85 3.60 L 26.82 3.60 L 26.82 6.23 L 2.85 6.23 Z" fill="#cfe5fa" stroke="#1b6fd6" stroke-width="1.2" stroke-linejoin="round" /><path d="M 2.85 7.69 L 26.82 7.69 M 2.85 20.11 L 26.82 20.11" fill="none" stroke="#1b6fd6" stroke-width="1.3" stroke-linejoin="round" /><path d="M 4.31 7.98 L 4.31 20.11 M 7.09 7.98 L 7.09 20.11 M 9.87 7.98 L 9.87 20.11 M 12.64 7.98 L 12.64 20.11 M 15.42 7.98 L 15.42 20.11 M 18.19 7.98 L 18.19 20.11 M 20.97 7.98 L 20.97 20.11 M 23.75 7.98 L 23.75 20.11" fill="none" stroke="#1b6fd6" stroke-width="1.6" stroke-linejoin="round" /><path d="M 16.00 30.49 L 19.96 28.68 L 17.64 26.45 Z" fill="#fbe9c8" stroke="#6b4a2a" stroke-width="0.7" stroke-linejoin="round" /><path d="M 19.96 28.68 L 17.64 26.45 L 25.78 17.93 L 28.10 20.16 Z" fill="#f2a33a" stroke="#6b4a2a" stroke-width="0.7" stroke-linejoin="round" /><path d="M 28.10 20.16 L 25.78 17.93 L 27.55 16.08 L 29.89 18.30 Z" fill="#9b4a22" stroke="#6b4a2a" stroke-width="0.7" stroke-linejoin="round" /><path d="M 18.79 27.57 L 26.93 19.05" fill="none" stroke="#fbd38a" stroke-width="0.8" stroke-linejoin="round" /><path d="M 16.00 30.49 L 16.89 29.55" fill="none" stroke="#333" stroke-width="1.2" stroke-linejoin="round" /></svg>
<svg class="a" style="left:575.8px;top:26px;overflow:visible" width="32" height="32" viewBox="0 0 32 32"><path d="M 2.82 20.84 L 20.65 2.87 L 29.86 10.61 L 11.88 29.03 Z" fill="#fdfdfd" stroke="#41464c" stroke-width="1.3" stroke-linejoin="round" /><path d="M 11.88 29.03 L 29.86 10.61 L 29.86 17.63 Z" fill="url(#g2)" stroke="#41464c" stroke-width="1.3" stroke-linejoin="round" /></svg>
<svg class="a" style="left:614.0px;top:26px;overflow:visible" width="32" height="32" viewBox="0 0 32 32"><path d="M 1.74 15.73 L 11.97 20.11 L 11.97 30.34 L 1.74 20.11 Z" fill="#c9ced4" stroke="#41464c" stroke-width="1.2" stroke-linejoin="round" /><path d="M 1.74 15.73 L 8.46 12.07 L 8.46 8.42 L 14.60 5.06 L 14.60 2.58 L 20.15 2.58 L 29.50 13.24 L 29.50 19.38 L 11.97 30.34 L 1.74 20.11 Z" fill="#eef0f2" stroke="#41464c" stroke-width="1.4" stroke-linejoin="round" /><path d="M 14.60 2.58 L 20.15 2.58 L 29.50 13.24 L 23.37 13.24 Z" fill="#fbfbfb" stroke="#41464c" stroke-width="0.9" stroke-linejoin="round" /><path d="M 23.37 13.24 L 29.50 13.24 L 29.50 19.38 L 23.37 19.38 Z" fill="#d3d7dc" stroke="#41464c" stroke-width="0.9" stroke-linejoin="round" /><path d="M 8.46 8.42 L 14.60 8.42 L 23.37 19.38 L 17.52 19.38 Z" fill="#fbfbfb" stroke="#41464c" stroke-width="0.9" stroke-linejoin="round" /><path d="M 14.60 5.06 L 14.60 8.42 M 17.52 19.38 L 17.52 23.77 L 23.37 19.38" fill="none" stroke="#41464c" stroke-width="0.9" stroke-linejoin="round" /><path d="M 1.74 15.73 L 8.46 15.73 L 17.52 23.77 L 11.97 26.98 Z" fill="#fbfbfb" stroke="#41464c" stroke-width="0.9" stroke-linejoin="round" /><path d="M 8.46 12.07 L 8.46 15.73 M 11.97 26.98 L 11.97 30.34 L 17.52 23.77" fill="none" stroke="#41464c" stroke-width="0.9" stroke-linejoin="round" /></svg>
<svg class="a" style="left:657.4px;top:26px;overflow:visible" width="32" height="32" viewBox="0 0 32 32"><text x="17.3" y="27.2" text-anchor="middle" font-family="'Liberation Sans',sans-serif" font-weight="bold" font-size="35" fill="#c2c7ce" stroke="#41464c" stroke-width="1.2" stroke-linejoin="round">A</text><text x="14.3" y="28.4" text-anchor="middle" font-family="'Liberation Sans',sans-serif" font-weight="bold" font-size="35" fill="#fbfbfb" stroke="#41464c" stroke-width="1.2" stroke-linejoin="round">A</text></svg>
<svg class="a" style="left:695.8px;top:26px;overflow:visible" width="32" height="32" viewBox="0 0 32 32"><path d="M 3.82 3.31 L 3.82 28.44" fill="none" stroke="#33373c" stroke-width="1.3" stroke-linejoin="round" /><path d="M 11.71 3.31 Q 13.17 23.77 28.66 28.44" fill="none" stroke="#33373c" stroke-width="1.3" stroke-linejoin="round" /><rect x="2.5" y="1.7" width="2.6" height="2.6" fill="#fff" stroke="#33373c" stroke-width=".9"/><rect x="2.5" y="27.1" width="2.6" height="2.6" fill="#fff" stroke="#33373c" stroke-width=".9"/><rect x="10.4" y="1.7" width="2.6" height="2.6" fill="#fff" stroke="#33373c" stroke-width=".9"/><rect x="27.4" y="27.1" width="2.6" height="2.6" fill="#fff" stroke="#33373c" stroke-width=".9"/></svg>
<svg class="a" style="left:736.9px;top:26px;overflow:visible" width="32" height="32" viewBox="0 0 32 32"><path d="M 4.22 2.58 L 0.57 2.58 L 0.57 30.34 L 4.22 30.34 M 24.68 2.58 L 28.33 2.58 L 28.33 30.34 L 24.68 30.34" fill="none" stroke="#33373c" stroke-width="1.4" stroke-linejoin="round" /><circle cx="11.5" cy="12.4" r="6.6" fill="url(#g2)" stroke="#41464c" stroke-width="1.1"/><path d="M 11.53 16.46 L 14.74 13.54 L 24.68 13.54 L 24.68 23.77 L 21.47 26.98 L 11.53 26.98 Z" fill="#e6e9ec" stroke="#41464c" stroke-width="1.2" stroke-linejoin="round" /><path d="M 11.53 16.46 L 21.47 16.46 L 21.47 26.98 M 21.47 16.46 L 24.68 13.54" fill="none" stroke="#41464c" stroke-width="1" stroke-linejoin="round" /><path d="M 21.47 16.46 L 24.68 13.54 L 24.68 23.77 L 21.47 26.98 Z" fill="#c2c7ce" stroke="none" stroke-width="0" stroke-linejoin="round" /><path d="M 11.53 16.46 L 14.74 13.54 L 24.68 13.54 L 21.47 16.46 Z" fill="#f8f9fa" stroke="#41464c" stroke-width="0.9" stroke-linejoin="round" /></svg>
<svg class="a" style="left:781.6px;top:26px;overflow:visible" width="32" height="32" viewBox="0 0 32 32"><path d="M 2.14 1.70 L 30.77 1.70 L 30.77 29.93 L 2.14 29.93 Z" fill="#ededed" stroke="#c9c9c9" stroke-width="1.2" stroke-linejoin="round" /><path d="M 10.96 1.70 L 10.96 29.93 M 10.96 10.93 L 30.77 10.93 M 10.96 10.93 L 30.77 29.93 M 30.77 10.93 L 10.96 29.93" fill="none" stroke="#c4c4c4" stroke-width="1" stroke-linejoin="round" /><path d="M 2.14 1.70 L 10.96 1.70 L 10.96 29.93 L 2.14 29.93 Z" fill="#f4f4f4" stroke="none" stroke-width="0" stroke-linejoin="round" /></svg>
<svg class="a" style="left:820.0px;top:26px;overflow:visible" width="32" height="32" viewBox="0 0 32 32"><path d="M 1.73 1.70 L 30.64 1.70 L 30.64 30.20 L 1.73 30.20 Z" fill="url(#g4)" stroke="#3a3e44" stroke-width="1.4" stroke-linejoin="round" /><path d="M 11.91 17.71 L 30.37 17.71 L 30.37 29.93 L 11.91 29.93 Z" fill="#a9d4f3" stroke="none" stroke-width="0" stroke-linejoin="round" /><path d="M 11.91 1.70 L 11.91 29.93 M 11.91 10.93 L 30.37 10.93" fill="none" stroke="#3a3e44" stroke-width="1.2" stroke-linejoin="round" /><path d="M 11.91 17.71 L 30.37 17.71" fill="none" stroke="#2f86e6" stroke-width="1.2" stroke-linejoin="round" /><path d="M 13.67 18.80 L 29.96 29.93 M 29.96 18.80 L 13.67 29.93" fill="none" stroke="#3a3e44" stroke-width="1.1" stroke-linejoin="round" /><path d="M 15.30 16.36 L 19.51 14.54 L 17.24 12.20 Z" fill="#fbe9c8" stroke="#6b4a2a" stroke-width="0.7" stroke-linejoin="round" /><path d="M 19.51 14.54 L 17.24 12.20 L 26.19 3.52 L 28.45 5.85 Z" fill="#f2a33a" stroke="#6b4a2a" stroke-width="0.7" stroke-linejoin="round" /><path d="M 28.45 5.85 L 26.19 3.52 L 28.14 1.62 L 30.42 3.95 Z" fill="#9b4a22" stroke="#6b4a2a" stroke-width="0.7" stroke-linejoin="round" /><path d="M 18.38 13.37 L 27.33 4.69" fill="none" stroke="#fbd38a" stroke-width="0.8" stroke-linejoin="round" /><path d="M 15.30 16.36 L 16.28 15.41" fill="none" stroke="#333" stroke-width="1.2" stroke-linejoin="round" /></svg>
<svg class="a" style="left:861.0px;top:26px;overflow:visible" width="32" height="32" viewBox="0 0 32 32"><path d="M 2.26 1.70 L 27.63 1.70 L 27.63 26.53 L 2.26 26.53 Z" fill="url(#g4)" stroke="#3a3e44" stroke-width="1.4" stroke-linejoin="round" /><path d="M 9.99 8.89 L 27.36 8.89 L 27.36 26.26 L 9.99 26.26 Z" fill="#a9d4f3" stroke="none" stroke-width="0" stroke-linejoin="round" /><path d="M 9.31 1.70 L 9.31 26.53 M 9.31 8.21 L 27.63 8.21" fill="none" stroke="#3a3e44" stroke-width="1.2" stroke-linejoin="round" /><path d="M 10.40 9.30 L 27.09 25.99 M 27.09 9.30 L 10.40 25.99" fill="none" stroke="#3a3e44" stroke-width="1.1" stroke-linejoin="round" /><path d="M 20.58 23.82 L 31.43 23.82 L 31.43 29.93 L 20.58 29.93 Z" fill="#fbfbfb" stroke="#33373c" stroke-width="1.2" stroke-linejoin="round" /><text x="26.0" y="29.0" text-anchor="middle" font-family="'Liberation Sans',sans-serif" font-weight="bold" font-size="6" fill="#222">1</text></svg>
<svg class="a" style="left:907.2px;top:26px;overflow:visible" width="32" height="32" viewBox="0 0 32 32"><path d="M 1.38 1.70 L 30.29 1.70 L 30.29 30.20 L 1.38 30.20 Z" fill="url(#gy)" stroke="#3a3e44" stroke-width="1.5" stroke-linejoin="round" /><path d="M 10.61 1.70 L 10.61 30.20 M 10.61 10.93 L 30.29 10.93" fill="none" stroke="#6b6340" stroke-width="0.9" stroke-linejoin="round" stroke-dasharray="3 1"/><path d="M 2.06 2.38 L 29.74 29.65 M 29.74 2.38 L 2.06 29.65" fill="none" stroke="#3a3e44" stroke-width="1.1" stroke-linejoin="round" /></svg>
<svg class="a" style="left:946.3px;top:26px;overflow:visible" width="32" height="32" viewBox="0 0 32 32"><path d="M 2.32 1.70 L 31.63 1.70 L 31.63 30.20 L 2.32 30.20 Z" fill="#ededed" stroke="#cdcdcd" stroke-width="1.1" stroke-linejoin="round" /><path d="M 11.54 1.70 L 11.54 23.14 M 2.32 23.14 L 31.63 23.14 M 3.13 2.38 L 19.69 19.07 M 30.81 2.38 L 16.97 16.36 M 2.32 30.20 L 10.19 23.14 M 31.63 30.20 L 25.11 23.14" fill="none" stroke="#c9c9c9" stroke-width="1" stroke-linejoin="round" /><path d="M 18.33 23.14 L 22.44 21.49 L 20.19 19.12 Z" fill="#f3f3f3" stroke="#b5b5b5" stroke-width="0.7" stroke-linejoin="round" /><path d="M 22.44 21.49 L 20.19 19.12 L 28.87 10.87 L 31.12 13.23 Z" fill="#d9d9d9" stroke="#b5b5b5" stroke-width="0.7" stroke-linejoin="round" /><path d="M 31.12 13.23 L 28.87 10.87 L 30.77 9.07 L 33.02 11.43 Z" fill="#cfcfcf" stroke="#b5b5b5" stroke-width="0.7" stroke-linejoin="round" /></svg>
<svg class="a" style="left:988.7px;top:26px;overflow:visible" width="32" height="32" viewBox="0 0 32 32"><path d="M 1.98 1.70 L 26.82 1.70 L 26.82 26.53 L 1.98 26.53 Z" fill="url(#gy)" stroke="#3a3e44" stroke-width="1.5" stroke-linejoin="round" /><path d="M 8.77 1.70 L 8.77 26.53 M 8.77 8.48 L 26.82 8.48" fill="none" stroke="#6b6340" stroke-width="0.9" stroke-linejoin="round" stroke-dasharray="3 1"/><path d="M 2.66 2.38 L 26.14 25.85 M 26.14 2.38 L 2.66 25.85" fill="none" stroke="#3a3e44" stroke-width="1.1" stroke-linejoin="round" /><ellipse cx="23.7" cy="26.1" rx="7" ry="3.3" fill="#f4f4f4" stroke="#33373c" stroke-width="1.2"/><text x="23.7" y="28.3" text-anchor="middle" font-family="'Liberation Sans',sans-serif" font-weight="bold" font-size="6" fill="#222">1</text></svg>
<svg class="a" style="left:1035.8px;top:26px;overflow:visible" width="32" height="32" viewBox="0 0 32 32"><path d="M 2.24 23.77 L 21.97 4.04 L 30.00 4.04 L 30.00 10.61 L 10.27 30.34 L 2.24 30.34 Z" fill="#fdfdfd" stroke="none" stroke-width="0" stroke-linejoin="round" /><path d="M 2.24 23.77 L 10.27 15.73 L 18.31 23.77 L 10.27 30.34 L 2.24 30.34 Z" fill="url(#ht)" stroke="#2b2f33" stroke-width="1.2" stroke-linejoin="round" /><path d="M 16.12 9.88 L 21.97 4.04 L 30.00 4.04 L 30.00 10.61 L 24.16 16.46 Z" fill="url(#ht)" stroke="#2b2f33" stroke-width="1.2" stroke-linejoin="round" /><path d="M 6.62 7.69 L 25.62 26.40" fill="none" stroke="#2f86e6" stroke-width="1.1" stroke-linejoin="round" /><path d="M 8.00 11.71 L 6.62 7.69 L 10.65 9.01" fill="none" stroke="#2f86e6" stroke-width="1.2" stroke-linejoin="round" /><path d="M 21.59 25.08 L 25.62 26.40 L 24.25 22.38" fill="none" stroke="#2f86e6" stroke-width="1.2" stroke-linejoin="round" /></svg>
<svg class="a" style="left:1073.9px;top:26px;overflow:visible" width="32" height="32" viewBox="0 0 32 32"><path d="M 1.40 7.40 L 29.17 7.40 L 29.17 14.71 L 1.40 14.71 Z" fill="#fdfdfd" stroke="none" stroke-width="0" stroke-linejoin="round" /><path d="M 1.40 7.40 L 9.44 7.40 L 9.44 14.71 L 1.40 14.71 Z" fill="url(#ht)" stroke="#2b2f33" stroke-width="1.2" stroke-linejoin="round" /><path d="M 21.86 7.40 L 29.17 7.40 L 29.17 14.71 L 21.86 14.71 Z" fill="url(#ht)" stroke="#2b2f33" stroke-width="1.2" stroke-linejoin="round" /><path d="M 1.40 17.92 L 29.17 17.92 L 29.17 25.23 L 1.40 25.23 Z" fill="#fdfdfd" stroke="none" stroke-width="0" stroke-linejoin="round" /><path d="M 1.40 17.92 L 9.44 17.92 L 9.44 25.23 L 1.40 25.23 Z" fill="url(#ht)" stroke="#2b2f33" stroke-width="1.2" stroke-linejoin="round" /><path d="M 21.86 17.92 L 29.17 17.92 L 29.17 25.23 L 21.86 25.23 Z" fill="url(#ht)" stroke="#2b2f33" stroke-width="1.2" stroke-linejoin="round" /><path d="M 15.58 2.58 L 15.58 30.34" fill="none" stroke="#2f86e6" stroke-width="1.1" stroke-linejoin="round" stroke-dasharray="2 1"/><path d="M 13.68 6.38 L 15.58 2.58 L 17.48 6.38" fill="none" stroke="#2f86e6" stroke-width="1.2" stroke-linejoin="round" /><path d="M 13.68 26.54 L 15.58 30.34 L 17.48 26.54" fill="none" stroke="#2f86e6" stroke-width="1.2" stroke-linejoin="round" /></svg>
<svg class="a" style="left:1112.6px;top:26px;overflow:visible" width="32" height="32" viewBox="0 0 32 32"><path d="M 11.66 2.58 L 21.16 2.58 L 21.16 30.34 L 11.66 30.34 Z" fill="#fdfdfd" stroke="none" stroke-width="0" stroke-linejoin="round" /><path d="M 11.66 2.58 L 21.16 2.58 L 21.16 10.61 L 11.66 10.61 Z" fill="url(#ht)" stroke="#2b2f33" stroke-width="1.2" stroke-linejoin="round" /><path d="M 11.66 22.30 L 21.16 22.30 L 21.16 30.34 L 11.66 30.34 Z" fill="url(#ht)" stroke="#2b2f33" stroke-width="1.2" stroke-linejoin="round" /><path d="M 4.79 16.46 L 28.02 16.46" fill="none" stroke="#2f86e6" stroke-width="1.1" stroke-linejoin="round" /><path d="M 8.59 18.36 L 4.79 16.46 L 8.59 14.56" fill="none" stroke="#2f86e6" stroke-width="1.2" stroke-linejoin="round" /><path d="M 24.22 18.36 L 28.02 16.46 L 24.22 14.56" fill="none" stroke="#2f86e6" stroke-width="1.2" stroke-linejoin="round" /></svg>
<svg class="a" style="left:1151.0px;top:26px;overflow:visible" width="32" height="32" viewBox="0 0 32 32"><path d="M 2.48 5.50 L 30.69 19.38 L 30.69 29.32 L 2.48 15.73 Z" fill="#fdfdfd" stroke="none" stroke-width="0" stroke-linejoin="round" /><path d="M 2.48 5.50 L 11.69 10.03 L 11.69 20.26 L 2.48 15.73 Z" fill="url(#ht)" stroke="#2b2f33" stroke-width="1.2" stroke-linejoin="round" /><path d="M 21.48 15.00 L 30.69 19.38 L 30.69 29.32 L 21.48 24.93 Z" fill="url(#ht)" stroke="#2b2f33" stroke-width="1.2" stroke-linejoin="round" /><path d="M 16.37 3.01 L 16.37 29.90" fill="none" stroke="#2f86e6" stroke-width="1.1" stroke-linejoin="round" stroke-dasharray="2 1"/><path d="M 14.47 6.81 L 16.37 3.01 L 18.27 6.81" fill="none" stroke="#2f86e6" stroke-width="1.2" stroke-linejoin="round" /><path d="M 14.47 26.10 L 16.37 29.90 L 18.27 26.10" fill="none" stroke="#2f86e6" stroke-width="1.2" stroke-linejoin="round" /></svg>
<svg class="a" style="left:1190.8px;top:26px;overflow:visible" width="32" height="32" viewBox="0 0 32 32"><path d="M 2.14 25.96 L 26.25 2.14 L 30.34 2.14 L 30.34 6.23 L 6.52 29.90 L 2.14 29.90 Z" fill="#c5cad0" stroke="#5a5f65" stroke-width="1" stroke-linejoin="round" /><path d="M 5.06 28.44 L 29.18 4.48" fill="none" stroke="#fdfdfd" stroke-width="3.2" stroke-linejoin="round" /><path d="M 2.14 25.96 L 26.25 2.14 M 6.52 29.90 L 30.34 6.23" fill="none" stroke="#2b2f33" stroke-width="1.1" stroke-linejoin="round" /><path d="M 9.45 29.61 L 9.45 9.44 L 30.34 9.44" fill="none" stroke="#d62a1e" stroke-width="1.3" stroke-linejoin="round" /></svg>
<svg class="a" style="left:1236.7px;top:26px;overflow:visible" width="32" height="32" viewBox="0 0 32 32"><path d="M 1.54 16.46 L 12.50 16.46" fill="none" stroke="#bdbdbd" stroke-width="1" stroke-linejoin="round" stroke-dasharray="3 1.5"/><path d="M 12.50 16.46 L 30.77 16.46 M 22.00 7.69 L 22.00 25.23" fill="none" stroke="#bdbdbd" stroke-width="1" stroke-linejoin="round" /><circle cx="22.0" cy="16.5" r="6.6" fill="#f4f4f4" stroke="#bdbdbd" stroke-width="1"/><path d="M22.0 16.5 v-6.6 a6.6 6.6 0 0 1 6.6 6.6Z" fill="#bdbdbd"/><path d="M22.0 16.5 v6.6 a6.6 6.6 0 0 1 -6.6 -6.6Z" fill="#bdbdbd"/><text x="7.4" y="13.2" text-anchor="middle" font-family="'Liberation Sans',sans-serif" font-size="7" fill="#bdbdbd">1</text></svg>
<svg class="a" style="left:1274.0px;top:26px;overflow:visible" width="32" height="32" viewBox="0 0 32 32"><path d="M 15.39 7.69 L 15.39 30.34 M 26.35 7.69 L 26.35 30.34 M 8.52 14.71 L 31.90 14.71 M 8.52 25.52 L 31.90 25.52" fill="none" stroke="#bdbdbd" stroke-width="1.1" stroke-linejoin="round" /><circle cx="15.4" cy="4.5" r="3" fill="#fbfbfb" stroke="#bdbdbd" stroke-width="1"/><circle cx="26.3" cy="4.5" r="3" fill="#fbfbfb" stroke="#bdbdbd" stroke-width="1"/><circle cx="5.3" cy="14.7" r="3" fill="#fbfbfb" stroke="#bdbdbd" stroke-width="1"/><circle cx="5.3" cy="25.5" r="3" fill="#fbfbfb" stroke="#bdbdbd" stroke-width="1"/></svg>
<svg class="a" style="left:1319.0px;top:26px;overflow:visible" width="32" height="32" viewBox="0 0 32 32"><path d="M 2.27 15.73 L 6.50 13.38 L 6.50 30.29 L 2.27 27.00 Z" fill="#fbfbfb" stroke="#2b2f33" stroke-width="1.2" stroke-linejoin="round" /><path d="M 6.50 30.29 L 27.64 24.18 L 27.64 21.37 L 6.50 27.47 Z" fill="#d9dce0" stroke="#2b2f33" stroke-width="1" stroke-linejoin="round" /><path d="M 6.50 10.09 L 27.64 4.27 L 27.64 24.18 L 6.50 30.29 Z" fill="#9fcdf3" stroke="#1b6fd6" stroke-width="1.3" stroke-linejoin="round" fill-opacity=".85"/><path d="M 13.55 8.21 L 13.55 28.22 M 20.59 6.33 L 20.59 26.25 M 6.50 16.86 L 27.64 11.03 M 6.50 23.53 L 27.64 17.61" fill="none" stroke="#1b6fd6" stroke-width="1.2" stroke-linejoin="round" /></svg>
<svg class="a" style="left:1358.0px;top:26px;overflow:visible" width="32" height="32" viewBox="0 0 32 32"><path d="M 2.26 8.21 L 23.87 3.33 L 23.87 24.18 L 2.26 29.35 Z" fill="url(#g1)" stroke="#2b2f33" stroke-width="1.3" stroke-linejoin="round" /><path d="M 9.50 6.52 L 9.50 27.66 M 16.64 4.93 L 16.64 25.88 M 2.26 15.26 L 23.87 10.28 M 2.26 22.31 L 23.87 17.23" fill="none" stroke="#2b2f33" stroke-width="1.2" stroke-linejoin="round" /><defs><radialGradient id="blb" cx=".4" cy=".35" r=".7"><stop offset="0" stop-color="#fff6c8"/><stop offset=".6" stop-color="#ffd24a"/><stop offset="1" stop-color="#f0a62a"/></radialGradient></defs><rect x="21.9" y="23.5" width="3.4" height="5" rx="1" fill="#d8dadd" stroke="#555" stroke-width=".7"/><circle cx="23.6" cy="19.0" r="5.3" fill="url(#blb)" stroke="#d98a1e" stroke-width=".9"/></svg>
<svg class="a" style="left:1395.8px;top:26px;overflow:visible" width="32" height="32" viewBox="0 0 32 32"><path d="M 11.44 3.05 L 29.76 3.05 L 21.77 24.18 L 3.45 24.18 Z" fill="#e6e6e6" stroke="#c6c6c6" stroke-width="1" stroke-linejoin="round" /><path d="M 8.62 3.05 L 31.17 3.05 M 2.04 24.18 L 23.18 24.18 M 11.91 1.17 L 10.97 4.46 M 29.95 1.17 L 29.01 4.46 M 3.92 22.78 L 2.98 26.06" fill="none" stroke="#c6c6c6" stroke-width="0.9" stroke-linejoin="round" /><path d="M 16.61 29.82 L 20.78 28.22 L 18.63 25.85 Z" fill="#f3f3f3" stroke="#b5b5b5" stroke-width="0.7" stroke-linejoin="round" /><path d="M 20.78 28.22 L 18.63 25.85 L 27.65 17.73 L 29.80 20.10 Z" fill="#d9d9d9" stroke="#b5b5b5" stroke-width="0.7" stroke-linejoin="round" /><path d="M 29.80 20.10 L 27.65 17.73 L 29.63 15.95 L 31.77 18.32 Z" fill="#cfcfcf" stroke="#b5b5b5" stroke-width="0.7" stroke-linejoin="round" /></svg>
<svg class="a" style="left:1435.7px;top:26px;overflow:visible" width="32" height="32" viewBox="0 0 32 32"><path d="M 1.79 2.58 L 30.07 2.58 L 30.07 30.39 L 1.79 30.39 Z" fill="#eceef0" stroke="#33373c" stroke-width="1.5" stroke-linejoin="round" /><path d="M 1.79 2.58 L 30.07 2.58 L 30.07 5.39 L 1.79 5.39 Z" fill="#4a4e54" stroke="#33373c" stroke-width="1" stroke-linejoin="round" /><path d="M 2.82 3.33 L 4.42 3.33 L 4.42 4.64 L 2.82 4.64 Z" fill="#f4f4f4" stroke="none" stroke-width="0" stroke-linejoin="round" /><path d="M 8.84 13.85 L 11.65 10.84 L 23.21 10.84 L 23.21 21.18 L 20.39 24.18 L 8.84 24.18 Z" fill="#7fb35e" stroke="#23331a" stroke-width="1.3" stroke-linejoin="round" /><path d="M 8.84 13.85 L 11.65 10.84 L 23.21 10.84 L 20.39 13.85 Z" fill="#e4f0d6" stroke="#23331a" stroke-width="0.9" stroke-linejoin="round" /><path d="M 20.39 13.85 L 23.21 10.84 L 23.21 21.18 L 20.39 24.18 Z" fill="#3e5a2c" stroke="#23331a" stroke-width="0.9" stroke-linejoin="round" /><path d="M 22.93 2.58 L 22.93 14.79 L 25.75 12.16 L 28.38 18.36 L 30.44 17.42 L 27.91 11.50 L 32.14 11.50 Z" fill="#fff" stroke="#33373c" stroke-width="1.1" stroke-linejoin="round" /></svg>
<svg class="a" style="left:297.0px;top:961px;overflow:visible" width="18" height="18" viewBox="0 0 18 18"><defs><pattern id="chk" width="3" height="3" patternUnits="userSpaceOnUse"><rect width="3" height="3" fill="#f4f4f4"/><rect width="1.5" height="1.5" fill="#555"/><rect x="1.5" y="1.5" width="1.5" height="1.5" fill="#555"/></pattern></defs><path d="M 1.52 1.76 L 16.63 1.76 L 16.63 12.45 L 1.52 12.45 Z" fill="url(#chk)" stroke="#33373c" stroke-width="1.2" stroke-linejoin="round" /></svg>
<svg class="a" style="left:318.0px;top:961px;overflow:visible" width="18" height="18" viewBox="0 0 18 18"><path d="M 2.48 6.19 L 5.82 2.68 L 16.93 2.68 L 16.93 9.53 L 13.34 13.28 L 2.48 13.28 Z" fill="#d8ecfb" stroke="#1b6fd6" stroke-width="1.3" stroke-linejoin="round" /><path d="M 2.48 6.19 L 13.34 6.19 L 13.34 13.28 M 13.34 6.19 L 16.93 2.68" fill="none" stroke="#1b6fd6" stroke-width="1.1" stroke-linejoin="round" /><path d="M 4.15 8.27 L 11.92 8.27" fill="none" stroke="#d6402e" stroke-width="1.3" stroke-linejoin="round" /><path d="M 4.15 10.19 L 11.92 10.19" fill="none" stroke="#5aa84a" stroke-width="1.3" stroke-linejoin="round" /><path d="M 4.15 11.86 L 11.92 11.86" fill="none" stroke="#6ab0e8" stroke-width="1.2" stroke-linejoin="round" /></svg>
<svg class="a" style="left:338.0px;top:961px;overflow:visible" width="18" height="18" viewBox="0 0 18 18"><defs><radialGradient id="sun" cx=".5" cy=".5" r=".5"><stop offset="0" stop-color="#fff"/><stop offset=".6" stop-color="#ffe08a"/><stop offset="1" stop-color="#f0a020"/></radialGradient></defs><path d="M 6.70 0.17 L 6.70 12.45 M 1.27 6.19 L 12.54 6.19 M 2.77 2.18 L 10.62 10.36 M 10.62 2.18 L 2.77 10.36" fill="none" stroke="#e8961e" stroke-width="1.2" stroke-linejoin="round" /><circle cx="6.7" cy="6.2" r="4" fill="url(#sun)" stroke="#e8961e" stroke-width=".8"/><path d="M 9.62 6.60 L 15.88 12.45 M 15.88 6.60 L 9.62 12.45" fill="none" stroke="#c9452a" stroke-width="1.9" stroke-linejoin="round" stroke-dasharray="1.1 .5"/></svg>
<svg class="a" style="left:360.0px;top:961px;overflow:visible" width="18" height="18" viewBox="0 0 18 18"><circle cx="7.7" cy="6.6" r="4.4" fill="#e8f2fc" stroke="#1b6fd6" stroke-width="1.3"/><path d="M 3.49 12.70 L 10.58 12.70" fill="none" stroke="#333" stroke-width="1.6" stroke-linejoin="round" /><path d="M 9.33 7.44 L 15.85 13.28 M 15.85 7.44 L 9.33 13.28" fill="none" stroke="#c9452a" stroke-width="1.9" stroke-linejoin="round" stroke-dasharray="1.1 .5"/></svg>
<svg class="a" style="left:380.0px;top:961px;overflow:visible" width="18" height="18" viewBox="0 0 18 18"><path d="M 5.20 5.35 Q 5.20 3.26 9.37 3.01 Q 13.55 3.26 13.55 5.35 L 13.13 10.78 Q 9.37 12.03 5.62 10.78 Z" fill="#e9e9e9" stroke="#777" stroke-width="1" stroke-linejoin="round" /><path d="M 5.20 7.02 L 1.19 4.10 M 7.29 3.01 L 9.37 2.01 L 11.46 3.01" fill="none" stroke="#777" stroke-width="1.1" stroke-linejoin="round" /><circle cx="14.0" cy="7.9" r="2.6" fill="#eaf3ff" stroke="#2f7fe6" stroke-width="1.1"/><rect x="12.9" y="10.7" width="2.2" height="2.2" fill="#555"/></svg>
<svg class="a" style="left:401.0px;top:961px;overflow:visible" width="18" height="18" viewBox="0 0 18 18"><path d="M 5.49 13.28 L 5.49 4.52 L 16.77 4.52 M 1.32 10.19 L 5.49 10.19 M 12.42 2.68 L 12.42 2.01" fill="none" stroke="#1b6fd6" stroke-width="1.6" stroke-linejoin="round" /><path d="M 1.32 10.19 L 2.99 10.19 M 11.59 2.68 L 13.84 2.68" fill="none" stroke="#333" stroke-width="1.4" stroke-linejoin="round" /><path d="M 7.58 13.28 L 7.58 6.85 L 16.77 6.85" fill="none" stroke="#1b6fd6" stroke-width="1.1" stroke-linejoin="round" /><path d="M 10.09 7.44 L 16.77 13.28 M 16.77 7.44 L 10.09 13.28" fill="none" stroke="#c9452a" stroke-width="1.9" stroke-linejoin="round" stroke-dasharray="1.1 .5"/></svg>
<svg class="a" style="left:422.0px;top:961px;overflow:visible" width="18" height="18" viewBox="0 0 18 18"><path d="M 5.37 13.28 L 5.37 4.52 L 13.30 4.52 M 1.44 10.19 L 5.37 10.19" fill="none" stroke="#1b6fd6" stroke-width="1.6" stroke-linejoin="round" /><path d="M 1.44 10.19 L 3.11 10.19 M 11.47 2.68 L 13.72 2.68" fill="none" stroke="#333" stroke-width="1.4" stroke-linejoin="round" /><path d="M 7.46 13.28 L 7.46 6.85 L 11.63 6.85" fill="none" stroke="#1b6fd6" stroke-width="1.1" stroke-linejoin="round" /><path d="M 8.29 9.53 L 10.80 9.53" fill="none" stroke="#d6402e" stroke-width="1.2" stroke-linejoin="round" /><circle cx="14.1" cy="7.4" r="2.6" fill="#eaf3ff" stroke="#2f7fe6" stroke-width="1.1"/><rect x="13.0" y="10.2" width="2.2" height="2.2" fill="#555"/></svg>
<svg class="a" style="left:442.0px;top:961px;overflow:visible" width="18" height="18" viewBox="0 0 18 18"><path d="M 2.59 5.35 L 10.53 0.34 L 16.79 4.93 L 16.79 11.61 L 8.86 13.70 L 3.85 11.20 L 3.85 6.19 Z" fill="#f1f2f3" stroke="#444" stroke-width="1.2" stroke-linejoin="round" /><path d="M 2.59 5.35 L 10.53 0.34 L 16.79 4.93 L 9.27 8.27 Z" fill="#dfe2e6" stroke="#444" stroke-width="1" stroke-linejoin="round" /><path d="M 5.52 12.03 L 5.52 7.44 L 7.60 8.27 L 7.60 13.03 Z" fill="#444" stroke="none" stroke-width="0" stroke-linejoin="round" /><path d="M 10.53 11.20 L 17.04 11.20 L 17.04 14.37 L 10.53 14.37 Z" fill="#6ab0e8" stroke="#1b4f8a" stroke-width="1" stroke-linejoin="round" /><path d="M 12.20 11.20 L 12.20 8.69 Q 13.87 6.85 15.54 8.69" fill="none" stroke="#333" stroke-width="1.1" stroke-linejoin="round" /><path d="M 12.36 12.28 L 15.20 12.28 L 15.20 13.45 L 12.36 13.45 Z" fill="#b8e0a0" stroke="none" stroke-width="0" stroke-linejoin="round" /></svg>
<svg class="a" style="left:464.0px;top:961px;overflow:visible" width="18" height="18" viewBox="0 0 18 18"><path d="M 1.22 6.19 Q 3.14 4.10 4.81 6.60 Q 6.06 9.53 8.15 10.78" fill="none" stroke="#333" stroke-width="1.3" stroke-linejoin="round" /><path d="M 9.40 3.51 Q 12.74 1.59 16.08 5.77" fill="none" stroke="#333" stroke-width="1.3" stroke-linejoin="round" /><path d="M 5.65 10.36 Q 7.32 13.28 11.07 11.20 L 12.08 8.69 Q 8.99 8.27 5.65 10.36 Z" fill="#cfe5fa" stroke="#333" stroke-width="1.1" stroke-linejoin="round" /><path d="M 12.08 8.69 Q 14.00 10.36 16.50 8.27 L 16.08 5.77 Q 14.00 6.60 12.08 8.69 Z" fill="#cfe5fa" stroke="#333" stroke-width="1.1" stroke-linejoin="round" /></svg>
<svg class="a" style="left:485.0px;top:961px;overflow:visible" width="18" height="18" viewBox="0 0 18 18"><ellipse cx="9.0" cy="7.4" rx="2.7" ry="3.2" fill="#f4f9ff" stroke="#2f7fe6" stroke-width="1.2"/><rect x="7.9" y="10.6" width="2.2" height="2.4" fill="#7a4fb0"/></svg>
<svg class="a" style="left:505.6px;top:961px;overflow:visible" width="18" height="18" viewBox="0 0 18 18"><path d="M 2.88 3.68 L 13.73 3.68 L 13.73 12.87 L 2.88 12.87 Z" fill="#e4eaf2" stroke="#222" stroke-width="1.5" stroke-linejoin="round" stroke-dasharray="1.6 1"/><path d="M 9.97 7.02 L 9.97 4.93 L 12.48 4.93 M 14.15 4.93 L 16.24 4.93 L 16.24 7.02 M 16.24 10.78 L 16.24 13.28 L 14.15 13.28 M 12.48 13.28 L 9.97 13.28 L 9.97 10.78" fill="none" stroke="#222" stroke-width="1.4" stroke-linejoin="round" /><rect x="11.6" y="8.4" width="3" height="3" fill="#fff" stroke="#222" stroke-width="1"/></svg>
<svg class="a" style="left:526.7px;top:961px;overflow:visible" width="18" height="18" viewBox="0 0 18 18"><path d="M 1.40 13.28 L 1.40 7.86 L 5.16 2.85 L 13.09 2.18 L 10.59 7.44 L 10.59 13.28" fill="#eceef0" stroke="#333" stroke-width="1.2" stroke-linejoin="round" /><path d="M 1.40 7.86 L 10.59 7.44 M 5.16 2.85 L 5.16 7.69 M 8.92 2.51 L 8.08 7.52" fill="none" stroke="#333" stroke-width="1" stroke-linejoin="round" /><path d="M 3.91 13.28 L 3.91 9.53 M 7.25 13.28 L 7.25 9.53 M 3.91 9.69 L 7.25 9.69" fill="none" stroke="#d62a1e" stroke-width="1.5" stroke-linejoin="round" /><circle cx="14.3" cy="7.0" r="3.2" fill="#ffe9a0" stroke="#f0a020" stroke-width="1.2"/><rect x="13.2" y="10.2" width="2.2" height="3" fill="#777"/></svg>
<svg class="a" style="left:547.4px;top:961px;overflow:visible" width="18" height="18" viewBox="0 0 18 18"><path d="M 3.25 7.02 L 8.26 2.68 L 16.19 2.68 L 16.19 9.53 L 12.02 13.28 L 3.25 13.28 Z" fill="#e6e6e6" stroke="#555" stroke-width="1.3" stroke-linejoin="round" /><path d="M 3.25 7.02 L 12.02 7.02 L 12.02 13.28 M 12.02 7.02 L 16.19 2.68 M 5.75 4.93 L 14.10 4.93 M 5.33 9.53 L 10.35 9.53 L 10.35 13.28" fill="none" stroke="#555" stroke-width="1.1" stroke-linejoin="round" /></svg>
<svg class="a" style="left:569.0px;top:961px;overflow:visible" width="18" height="18" viewBox="0 0 18 18"><path d="M 1.44 1.59 L 1.44 12.87 M 16.47 1.59 L 16.47 5.35 M 1.44 3.01 L 16.47 3.01" fill="none" stroke="#333" stroke-width="1.3" stroke-linejoin="round" /><path d="M 2.52 10.36 L 9.62 10.36" fill="none" stroke="#777" stroke-width="1" stroke-linejoin="round" stroke-dasharray="1.5 1.2"/><path d="M 10.29 8.69 L 16.97 8.69 L 16.97 12.70 L 10.29 12.70 Z" fill="#888" stroke="#444" stroke-width="1" stroke-linejoin="round" /><path d="M 11.71 8.69 Q 13.63 5.35 15.63 8.69" fill="none" stroke="#444" stroke-width="1.3" stroke-linejoin="round" /><path d="M 11.29 10.78 L 15.97 10.78" fill="none" stroke="#ddd" stroke-width="0.9" stroke-linejoin="round" /></svg>
<svg class="a" style="left:939.0px;top:984px;overflow:visible" width="18" height="18" viewBox="0 0 18 18"><path d="M 6.05 4.22 L 8.79 1.85 L 12.44 2.94 L 12.44 8.79 L 6.05 8.79 Z" fill="#b8e0a0" stroke="#3a6a2a" stroke-width="0.9" stroke-linejoin="round" /><path d="M 1.12 9.15 L 4.77 7.33 L 8.79 9.15 L 8.79 14.63 L 4.77 16.09 L 1.12 14.63 Z" fill="#5aa0e8" stroke="#1b4f9a" stroke-width="1" stroke-linejoin="round" /><path d="M 4.77 7.33 L 4.77 16.09" fill="none" stroke="#dff0ff" stroke-width="1.5" stroke-linejoin="round" /><path d="M 12.08 7.33 Q 12.08 10.61 13.54 11.35 L 13.54 15.73 L 15.36 15.73 L 15.36 11.35 Q 16.83 10.61 16.83 7.33 L 15.36 7.33 L 15.36 9.52 L 13.54 9.52 L 13.54 7.33 Z" fill="#fbfbfb" stroke="#1b4f9a" stroke-width="1" stroke-linejoin="round" /></svg>
<svg class="a" style="left:1176.0px;top:984px;overflow:visible" width="18" height="18" viewBox="0 0 18 18"><path d="M 4.71 2.39 L 15.67 2.39 L 15.67 6.96 L 4.71 6.96 Z" fill="#dcdcdc" stroke="#9a9a9a" stroke-width="1" stroke-linejoin="round" /><path d="M 15.67 4.77 L 16.95 4.77 L 16.95 9.15 L 10.19 10.25 L 8.91 12.81" fill="none" stroke="#9a9a9a" stroke-width="1.2" stroke-linejoin="round" /><path d="M 6.53 12.08 L 10.19 12.08 L 11.47 16.09 L 1.05 16.09 Z" fill="#a8a8a8" stroke="none" stroke-width="0" stroke-linejoin="round" /></svg>
<svg class="a" style="left:1229.0px;top:984px;overflow:visible" width="18" height="18" viewBox="0 0 18 18"><path d="M 1.58 1.85 L 16.56 1.85 L 16.56 16.09 L 1.58 16.09 Z" fill="#fbfbfb" stroke="#222" stroke-width="1.4" stroke-linejoin="round" /><path d="M 1.58 4.04 L 16.56 4.04" fill="none" stroke="#222" stroke-width="1.4" stroke-linejoin="round" /><path d="M 3.77 6.60 L 5.60 6.60 M 7.42 6.60 L 14.73 6.60 M 3.77 10.07 L 5.60 10.07 M 7.42 10.07 L 14.73 10.07 M 3.77 13.54 L 5.60 13.54 M 7.42 13.54 L 14.73 13.54" fill="none" stroke="#222" stroke-width="1.5" stroke-linejoin="round" /></svg>
<svg class="a" style="left:1255.0px;top:984px;overflow:visible" width="18" height="18" viewBox="0 0 18 18"><path d="M 4.26 1.48 L 16.13 1.48 L 16.13 15.18 L 8.83 15.18 L 8.83 9.70 L 4.26 9.70 Z" fill="#a9a9a9" stroke="none" stroke-width="0" stroke-linejoin="round" /><path d="M 1.52 12.81 L 8.83 12.81 M 6.64 10.25 L 9.38 12.81 L 6.64 15.36" fill="none" stroke="#9a9a9a" stroke-width="1.3" stroke-linejoin="round" /><path d="M 4.26 4.22 L 7.00 6.96" fill="none" stroke="#bdbdbd" stroke-width="1" stroke-linejoin="round" /></svg>
<svg class="a" style="left:1663.0px;top:984px;overflow:visible" width="18" height="18" viewBox="0 0 18 18"><path d="M 2.41 4.22 Q 2.41 2.36 5.15 2.36 L 8.44 2.36 Q 10.85 2.36 10.85 4.55 Q 10.85 6.96 8.44 6.96 L 5.15 6.96 Q 2.41 6.96 2.41 4.22 Z" fill="none" stroke="#e8a21a" stroke-width="2" stroke-linejoin="round" /><path d="M 8.44 4.55 Q 8.44 2.36 11.18 2.36 L 13.92 2.36 Q 16.66 2.36 16.66 4.55 Q 16.66 6.96 13.92 6.96 L 11.18 6.96 Q 8.44 6.96 8.44 4.55 Z" fill="none" stroke="#e8a21a" stroke-width="2" stroke-linejoin="round" /><path d="M 6.80 4.99 L 6.80 14.87 L 9.09 12.79 L 10.96 16.65 L 12.63 15.82 L 10.75 12.07 L 13.88 12.07 Z" fill="#fff" stroke="#333" stroke-width="0.9" stroke-linejoin="round" /></svg>
<svg class="a" style="left:1689.0px;top:984px;overflow:visible" width="18" height="18" viewBox="0 0 18 18"><path d="M 1.29 9.70 L 9.29 2.80 L 9.29 9.70 Z" fill="#9fcdf3" stroke="#1b6fd6" stroke-width="1.2" stroke-linejoin="round" /><path d="M 1.29 13.32 L 5.68 10.03 L 9.84 10.03 M 1.29 13.32 L 9.84 13.32" fill="none" stroke="#1b6fd6" stroke-width="1.3" stroke-linejoin="round" /><path d="M 10.39 1.48 L 16.64 6.96 M 16.64 1.48 L 10.39 6.96" fill="none" stroke="#c9452a" stroke-width="1.8" stroke-linejoin="round" stroke-dasharray="1.1 .5"/><path d="M 10.39 6.96 L 10.39 15.29 L 12.32 13.54 L 13.90 16.78 L 15.30 16.08 L 13.72 12.92 L 16.35 12.92 Z" fill="#fff" stroke="#333" stroke-width="0.9" stroke-linejoin="round" /></svg>
<svg class="a" style="left:1715.0px;top:984px;overflow:visible" width="18" height="18" viewBox="0 0 18 18"><path d="M 2.47 2.03 L 10.14 2.03 L 10.14 3.89 L 8.83 3.89 L 8.83 8.28 L 11.02 8.28 L 11.02 10.80 L 1.38 10.80 L 1.38 8.28 L 3.79 8.28 L 3.79 3.89 L 2.47 3.89 Z" fill="#fde7b0" stroke="#c4452a" stroke-width="1.2" stroke-linejoin="round" /><path d="M 4.12 5.32 L 8.50 5.32 M 4.12 6.96 L 8.50 6.96" fill="none" stroke="#f0a020" stroke-width="1.4" stroke-linejoin="round" /><path d="M 6.31 10.80 L 6.31 16.28" fill="none" stroke="#333" stroke-width="1.3" stroke-linejoin="round" /><path d="M 10.14 5.32 L 10.14 14.69 L 12.31 12.71 L 14.09 16.36 L 15.67 15.57 L 13.89 12.02 L 16.85 12.02 Z" fill="#fff" stroke="#333" stroke-width="0.9" stroke-linejoin="round" /></svg>
<svg class="a" style="left:1741.0px;top:984px;overflow:visible" width="18" height="18" viewBox="0 0 18 18"><path d="M 2.23 3.67 L 8.80 2.03 L 8.80 14.08 L 2.23 15.51 Z" fill="#a9d4f3" stroke="#1b6fd6" stroke-width="1.5" stroke-linejoin="round" /><path d="M 10.45 1.48 L 16.81 6.96 M 16.81 1.48 L 10.45 6.96" fill="none" stroke="#c9452a" stroke-width="1.8" stroke-linejoin="round" stroke-dasharray="1.1 .5"/><path d="M 10.23 6.96 L 10.23 15.29 L 12.16 13.54 L 13.74 16.78 L 15.14 16.08 L 13.56 12.92 L 16.19 12.92 Z" fill="#fff" stroke="#333" stroke-width="0.9" stroke-linejoin="round" /></svg>
<svg class="a" style="left:1767.0px;top:984px;overflow:visible" width="18" height="18" viewBox="0 0 18 18"><path d="M 5.49 1.26 L 5.49 9.70 M 1.44 5.54 L 9.66 5.54" fill="none" stroke="#111" stroke-width="1.4" stroke-linejoin="round" /><path d="M 4.18 2.58 L 5.49 1.04 L 6.81 2.58 M 4.18 8.38 L 5.49 9.92 L 6.81 8.38 M 2.86 4.22 L 1.44 5.54 L 2.86 6.85 M 8.34 4.22 L 9.66 5.54 L 8.34 6.85" fill="none" stroke="#111" stroke-width="1.2" stroke-linejoin="round" /><rect x="8.4" y="2.9" width="2" height="2" fill="#fff" stroke="#111" stroke-width=".7"/><path d="M 9.88 4.55 L 9.88 14.43 L 12.17 12.35 L 14.04 16.21 L 15.71 15.38 L 13.83 11.63 L 16.96 11.63 Z" fill="#fff" stroke="#333" stroke-width="0.9" stroke-linejoin="round" /></svg>
<svg class="a" style="left:1792.0px;top:984px;overflow:visible" width="18" height="18" viewBox="0 0 18 18"><circle cx="9.3" cy="8.3" r="5.6" fill="none" stroke="#b9b9b9" stroke-width="2.6" stroke-dasharray="2 1.5"/></svg>
<svg class="a" style="left:1816.0px;top:984px;overflow:visible" width="18" height="18" viewBox="0 0 18 18"><defs><linearGradient id="fn" x1="0" y1="0" x2="1" y2="0"><stop offset="0" stop-color="#7d8792"/><stop offset=".5" stop-color="#e9edf2"/><stop offset="1" stop-color="#7d8792"/></linearGradient></defs><path d="M 1.43 1.70 L 16.55 1.70 L 16.55 3.45 L 10.85 10.25 L 10.85 15.18 L 7.24 15.18 L 7.24 10.25 L 1.43 3.45 Z" fill="url(#fn)" stroke="#4a525c" stroke-width="1.1" stroke-linejoin="round" /><path d="M 1.43 2.58 L 16.55 2.58" fill="none" stroke="#4a525c" stroke-width="0.8" stroke-linejoin="round" /></svg>
</body></html>
